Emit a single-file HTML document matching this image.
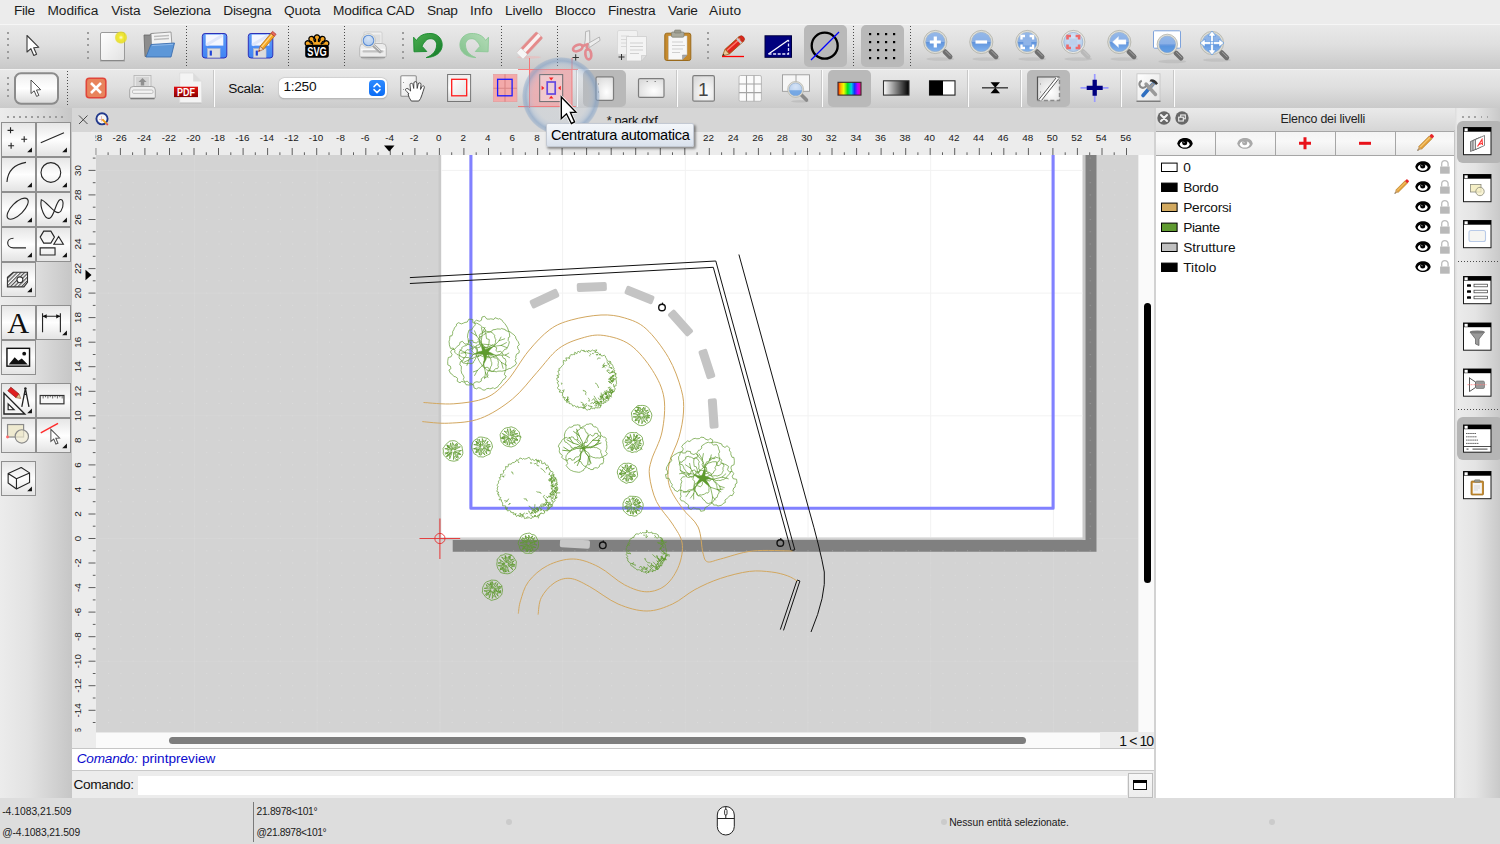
<!DOCTYPE html>
<html lang="it"><head><meta charset="utf-8"><title>QCAD - park.dxf</title>
<style>

html,body{margin:0;padding:0}
body{width:1500px;height:844px;position:relative;overflow:hidden;background:#ececec;font-family:"Liberation Sans",sans-serif;color:#000}
div,span,svg{position:absolute;box-sizing:border-box}
svg{overflow:visible}
.mi{top:2px;height:18px;font-size:14.6px;line-height:18px;white-space:nowrap;color:#1a1a1a}
#menubar{left:0;top:0;width:1500px;height:24px;background:#ececec}
#tb1{left:0;top:24px;width:1500px;height:44.500px;background:linear-gradient(#e9e9e9,#dfdfdf 45%,#c9c9c9);border-top:1px solid #f6f6f6}
#tb2{left:0;top:68.500px;width:1500px;height:39.500px;background:linear-gradient(#e9e9e9,#dfdfdf 45%,#cacaca);border-top:1px solid #f3f3f3}
.vsep{width:1px;background:repeating-linear-gradient(#4a4a4a 0,#4a4a4a 1px,transparent 1px,transparent 3px)}
.wsep{width:2.200px;background:linear-gradient(90deg,#c8c8c8,#c8c8c8 35%,#fcfcfc 35%)}
.pressed{background:#b9b9b9;border-radius:5px}

</style></head>
<body>
<svg width="0" height="0" style="left:0;top:0"><defs>
<linearGradient id="lens" x1="0" y1="0" x2="0" y2="1"><stop offset="0" stop-color="#6f9fe0"/><stop offset="0.5" stop-color="#5f93dc"/><stop offset="1" stop-color="#82b3ee"/></linearGradient>
<radialGradient id="lensl" cx="0.5" cy="0.3" r="0.8"><stop offset="0" stop-color="#d6e4f6"/><stop offset="1" stop-color="#a9c6ea"/></radialGradient>
<linearGradient id="pg" x1="0" y1="0" x2="1" y2="1"><stop offset="0" stop-color="#ffffff"/><stop offset="1" stop-color="#e2e2e2"/></linearGradient>
<radialGradient id="pgr" cx="0.6" cy="0.65" r="0.7"><stop offset="0" stop-color="#ffffff"/><stop offset="1" stop-color="#dcdcdc"/></radialGradient>
<linearGradient id="btn" x1="0" y1="0" x2="0" y2="1"><stop offset="0" stop-color="#efefef"/><stop offset="0.5" stop-color="#ffffff"/><stop offset="1" stop-color="#d9d9d9"/></linearGradient>
<linearGradient id="rainbow" x1="0" y1="0" x2="1" y2="0"><stop offset="0" stop-color="#ff2000"/><stop offset="0.12" stop-color="#ffb000"/><stop offset="0.25" stop-color="#f0ff00"/><stop offset="0.42" stop-color="#00e020"/><stop offset="0.58" stop-color="#00d0e0"/><stop offset="0.72" stop-color="#1030ff"/><stop offset="0.86" stop-color="#c000ff"/><stop offset="1" stop-color="#ff0080"/></linearGradient>
<linearGradient id="graygrad" x1="0" y1="0" x2="1" y2="0"><stop offset="0" stop-color="#fff"/><stop offset="1" stop-color="#000"/></linearGradient>
<linearGradient id="flop" x1="0" y1="0" x2="0" y2="1"><stop offset="0" stop-color="#5f9cf8"/><stop offset="1" stop-color="#3f83f3"/></linearGradient>
<linearGradient id="ug" x1="0" y1="0" x2="1" y2="1"><stop offset="0" stop-color="#4caf50"/><stop offset="1" stop-color="#157a2a"/></linearGradient>
<linearGradient id="rg" x1="0" y1="0" x2="1" y2="1"><stop offset="0" stop-color="#b5dcb8"/><stop offset="1" stop-color="#7fc08a"/></linearGradient>
<linearGradient id="pdfr" x1="0" y1="0" x2="0" y2="1"><stop offset="0" stop-color="#e01010"/><stop offset="1" stop-color="#8a0000"/></linearGradient>
</defs></svg><div id="menubar"><span style="left:14.1px;top:2px;font-size:13.7px;line-height:18px;letter-spacing:-0.366px;white-space:nowrap;color:#1c1c1c">File</span><span style="left:47.4px;top:2px;font-size:13.7px;line-height:18px;letter-spacing:-0.009px;white-space:nowrap;color:#1c1c1c">Modifica</span><span style="left:111.2px;top:2px;font-size:13.7px;line-height:18px;letter-spacing:-0.197px;white-space:nowrap;color:#1c1c1c">Vista</span><span style="left:153.1px;top:2px;font-size:13.7px;line-height:18px;letter-spacing:-0.292px;white-space:nowrap;color:#1c1c1c">Seleziona</span><span style="left:223.3px;top:2px;font-size:13.7px;line-height:18px;letter-spacing:-0.303px;white-space:nowrap;color:#1c1c1c">Disegna</span><span style="left:284px;top:2px;font-size:13.7px;line-height:18px;letter-spacing:-0.159px;white-space:nowrap;color:#1c1c1c">Quota</span><span style="left:333px;top:2px;font-size:13.7px;line-height:18px;letter-spacing:-0.181px;white-space:nowrap;color:#1c1c1c">Modifica CAD</span><span style="left:427px;top:2px;font-size:13.7px;line-height:18px;letter-spacing:-0.367px;white-space:nowrap;color:#1c1c1c">Snap</span><span style="left:470px;top:2px;font-size:13.7px;line-height:18px;letter-spacing:-0.086px;white-space:nowrap;color:#1c1c1c">Info</span><span style="left:505px;top:2px;font-size:13.7px;line-height:18px;letter-spacing:-0.188px;white-space:nowrap;color:#1c1c1c">Livello</span><span style="left:555px;top:2px;font-size:13.7px;line-height:18px;letter-spacing:-0.099px;white-space:nowrap;color:#1c1c1c">Blocco</span><span style="left:608px;top:2px;font-size:13.7px;line-height:18px;letter-spacing:-0.244px;white-space:nowrap;color:#1c1c1c">Finestra</span><span style="left:668px;top:2px;font-size:13.7px;line-height:18px;letter-spacing:-0.287px;white-space:nowrap;color:#1c1c1c">Varie</span><span style="left:709px;top:2px;font-size:13.7px;line-height:18px;letter-spacing:0.259px;white-space:nowrap;color:#1c1c1c">Aiuto</span></div><div id="tb1"></div><div id="tb2"></div><div style="left:7px;top:32.0px;width:2px;height:2px;background:#9c9c9c"></div><div style="left:7px;top:38.2px;width:2px;height:2px;background:#9c9c9c"></div><div style="left:7px;top:44.4px;width:2px;height:2px;background:#9c9c9c"></div><div style="left:7px;top:50.6px;width:2px;height:2px;background:#9c9c9c"></div><div style="left:7px;top:56.8px;width:2px;height:2px;background:#9c9c9c"></div><div style="left:87px;top:32.0px;width:2px;height:2px;background:#9c9c9c"></div><div style="left:87px;top:38.2px;width:2px;height:2px;background:#9c9c9c"></div><div style="left:87px;top:44.4px;width:2px;height:2px;background:#9c9c9c"></div><div style="left:87px;top:50.6px;width:2px;height:2px;background:#9c9c9c"></div><div style="left:87px;top:56.8px;width:2px;height:2px;background:#9c9c9c"></div><div style="left:402px;top:32.0px;width:2px;height:2px;background:#9c9c9c"></div><div style="left:402px;top:38.2px;width:2px;height:2px;background:#9c9c9c"></div><div style="left:402px;top:44.4px;width:2px;height:2px;background:#9c9c9c"></div><div style="left:402px;top:50.6px;width:2px;height:2px;background:#9c9c9c"></div><div style="left:402px;top:56.8px;width:2px;height:2px;background:#9c9c9c"></div><div style="left:707px;top:32.0px;width:2px;height:2px;background:#9c9c9c"></div><div style="left:707px;top:38.2px;width:2px;height:2px;background:#9c9c9c"></div><div style="left:707px;top:44.4px;width:2px;height:2px;background:#9c9c9c"></div><div style="left:707px;top:50.6px;width:2px;height:2px;background:#9c9c9c"></div><div style="left:707px;top:56.8px;width:2px;height:2px;background:#9c9c9c"></div><div class="vsep" style="left:186px;top:26px;height:40px"></div><div class="vsep" style="left:288px;top:26px;height:40px"></div><div class="vsep" style="left:344px;top:26px;height:40px"></div><div class="vsep" style="left:501px;top:26px;height:40px"></div><div class="vsep" style="left:557px;top:26px;height:40px"></div><div class="vsep" style="left:853px;top:26px;height:40px"></div><div class="vsep" style="left:910px;top:26px;height:40px"></div><div class="pressed" style="left:804px;top:25px;width:43px;height:42px"></div><div class="pressed" style="left:861px;top:25px;width:43px;height:42px"></div><div class="pressed" style="left:583px;top:70px;width:43px;height:37px"></div><div class="pressed" style="left:828px;top:70px;width:43px;height:37px"></div><div class="pressed" style="left:1027px;top:70px;width:43px;height:37px"></div><svg style="left:0;top:0" width="1500" height="110" viewBox="0 0 1500 110"><path transform="translate(27,35.5) scale(1.0)" d="M0 0 L0 16.5 L3.9 13.2 L6.8 20 L9.6 18.8 L6.7 12.2 L11.8 11.8 Z" fill="#fff" stroke="#3c3c3c" stroke-width="1.1" stroke-linejoin="round"/><rect x="100.5" y="32.5" width="24" height="28" rx="1.5" fill="url(#pg)" stroke="#9a9a9a" stroke-width="1"/><path d="M100 60.8h25" stroke="#777" stroke-width="1.2" opacity=".6"/><radialGradient id="glow"><stop offset="0" stop-color="#fffbe0"/><stop offset="0.35" stop-color="#f2ea30"/><stop offset="0.8" stop-color="#e6dc20" stop-opacity="0.85"/><stop offset="1" stop-color="#e6dc20" stop-opacity="0"/></radialGradient><circle cx="121" cy="37.5" r="6.6" fill="url(#glow)"/><path d="M144 35 l6 0 l1 -1.5 l3 0 l0 23 l-9 0z" fill="#8c8c8c" stroke="#666" stroke-width=".8"/><path d="M151 33.5 l20 -1.5 l1 14 l-20 10z" fill="#f4f4f4" stroke="#8a8a8a" stroke-width=".8"/><path d="M154 36.5l15 -1M154 39.5l15 -1" stroke="#bdbdbd" stroke-width="1.6"/><path d="M151 44.5 l23.5 -1.5 l-3.5 14 l-25 0z" fill="#5d97d8" stroke="#3d6fb0" stroke-width=".9" stroke-linejoin="round"/><path d="M152 45.6 l21 -1.3" stroke="#8fb9ea" stroke-width="1"/><rect x="202.3" y="33.5" width="24.5" height="24.5" rx="2.8" fill="url(#flop)" stroke="#2d2fb8" stroke-width="1"/><rect x="205.70000000000002" y="34.6" width="17.6" height="11" fill="#f3f6ff"/><path d="M206.3 45 l16 -9.5" stroke="#dfe6fa" stroke-width="3"/><rect x="207.5" y="48.6" width="12.6" height="9" fill="#dcdcdc" stroke="#b9b9c4" stroke-width=".5"/><rect x="209.70000000000002" y="50.6" width="2.2" height="5" fill="#2244d8"/><rect x="248.3" y="33.5" width="24.5" height="24.5" rx="2.8" fill="url(#flop)" stroke="#2d2fb8" stroke-width="1"/><rect x="251.70000000000002" y="34.6" width="17.6" height="11" fill="#f3f6ff"/><path d="M252.3 45 l16 -9.5" stroke="#dfe6fa" stroke-width="3"/><rect x="253.5" y="48.6" width="12.6" height="9" fill="#dcdcdc" stroke="#b9b9c4" stroke-width=".5"/><rect x="255.70000000000002" y="50.6" width="2.2" height="5" fill="#2244d8"/><g transform="translate(259.5,50.5) rotate(-50)"><rect x="3.5" y="-2.3" width="17" height="4.6" fill="#f5a623" stroke="#b87010" stroke-width=".7"/><rect x="20.5" y="-2.3" width="2.6" height="4.6" fill="#e66a5a" stroke="#a33" stroke-width=".6"/><path d="M3.5 -2.3 L-1.5 0 L3.5 2.3z" fill="#f3d9b0" stroke="#a0522d" stroke-width=".6"/><path d="M0.2 -0.8L-1.5 0L0.2 .8z" fill="#a02020"/><path d="M4 -0.6h16" stroke="#ffd98a" stroke-width="1.2"/></g><g fill="#f5a623" stroke="#000" stroke-width="1.3"><g transform="translate(317,47.5) rotate(-66)"><path d="M-1.5 0 L-1.5 -8 a2.6 2.6 0 1 1 3 0 L1.5 0z"/></g><g transform="translate(317,47.5) rotate(-33)"><path d="M-1.5 0 L-1.5 -8 a2.6 2.6 0 1 1 3 0 L1.5 0z"/></g><g transform="translate(317,47.5) rotate(0)"><path d="M-1.5 0 L-1.5 -8 a2.6 2.6 0 1 1 3 0 L1.5 0z"/></g><g transform="translate(317,47.5) rotate(33)"><path d="M-1.5 0 L-1.5 -8 a2.6 2.6 0 1 1 3 0 L1.5 0z"/></g><g transform="translate(317,47.5) rotate(66)"><path d="M-1.5 0 L-1.5 -8 a2.6 2.6 0 1 1 3 0 L1.5 0z"/></g></g><circle cx="317" cy="46" r="4.2" fill="#f5a623"/><rect x="305.2" y="44.8" width="23.6" height="12.9" rx="2.6" fill="#000"/><text x="317" y="56.3" font-family="Liberation Sans, sans-serif" font-weight="bold" font-size="12.8" text-anchor="middle" fill="#fff" textLength="19.6" lengthAdjust="spacingAndGlyphs">SVG</text><rect x="364" y="32" width="18" height="14" rx="1" fill="#f0f0f0" stroke="#c8c8c8" stroke-width=".8"/><rect x="373.500" y="34.500" width="7" height="8" fill="#dedede"/><path d="M359.700 47.500 q0 -4 4 -4 l18.600 0 q4 0 4 4 l0 8 q0 2 -2 2 l-22.600 0 q-2 0 -2 -2z" fill="#ececec" stroke="#b4b4b4" stroke-width=".9"/><path d="M361 49.500h24" stroke="#fafafa" stroke-width="1.500"/><rect x="362.500" y="50.300" width="21" height="2.200" rx="1" fill="#c2c2c2"/><path d="M361 57.300h24" stroke="#9a9a9a" stroke-width="1.300"/><ellipse cx="373" cy="58.600" rx="12" ry="1" fill="#000" opacity=".12"/><line x1="373.500" y1="45.500" x2="380" y2="51.500" stroke="#a6a6a6" stroke-width="3.400" stroke-linecap="round"/><line x1="374" y1="45.300" x2="380" y2="50.800" stroke="#e0e0e0" stroke-width="1" stroke-linecap="round"/><circle cx="368.500" cy="40.500" r="7" fill="#ebebe6" stroke="#b4b4ac" stroke-width=".6"/><circle cx="368.500" cy="40.500" r="5.300" fill="url(#lensl)" stroke="#5f8fd6" stroke-width="1.100"/><path d="M416.5 40.5 C419.500 35 425 33.300 431 33.500 C438 33.800 442.200 39 442.200 44.800 C442.200 52.500 435.500 57.300 426.200 57.600 C432.500 55.300 436.600 51 436.600 44.800 C436.600 40.500 433.500 38.600 430 38.700 C426.800 38.800 424 42 422 46.200 L426.800 51.500 L414 51.800 L413.600 37.200 Z" fill="url(#ug)" stroke="#178a2c" stroke-width=".9" stroke-linejoin="round"/><path transform="translate(902.100,0) scale(-1,1)" d="M416.5 40.5 C419.500 35 425 33.300 431 33.500 C438 33.800 442.200 39 442.200 44.800 C442.200 52.500 435.500 57.300 426.200 57.600 C432.500 55.300 436.600 51 436.600 44.800 C436.600 40.500 433.500 38.600 430 38.700 C426.800 38.800 424 42 422 46.200 L426.800 51.500 L414 51.800 L413.600 37.200 Z" fill="url(#rg)" stroke="#8cc896" stroke-width=".9" stroke-linejoin="round"/><ellipse cx="529" cy="57.3" rx="12" ry="1.400" fill="#e9bcbc" opacity=".7"/><g transform="translate(530,45) rotate(-47)"><rect x="-14" y="-4.600" width="28" height="9.200" rx="1.400" fill="#e58a8a" stroke="#d9a0a0" stroke-width=".6"/><rect x="-14" y="-1.800" width="28" height="3.600" fill="#f8f1f1"/><rect x="-15" y="-4.600" width="6.500" height="9.200" rx="1" fill="#f6f6f6" stroke="#cfcfcf" stroke-width=".6"/></g><path d="M585.6 31.6 L589.6 30.6 L589.8 41.5 L587 48.2 L584.2 46.2 L585.3 40z" fill="#ededed" stroke="#a9a9a9" stroke-width=".8" stroke-linejoin="round"/><path d="M588.6 43.2 L599.4 37 L600.1 40.4 L589.3 47.6z" fill="#ededed" stroke="#a9a9a9" stroke-width=".8" stroke-linejoin="round"/><path d="M582.5 46 L587.5 44.2 M586.8 45 L587.6 49.5" stroke="#e28a90" stroke-width="2.6" stroke-linecap="round"/><ellipse cx="577.8" cy="47.9" rx="5" ry="3" transform="rotate(-24 577.8 47.9)" fill="none" stroke="#e28a90" stroke-width="2.7"/><ellipse cx="588.3" cy="54.2" rx="2.9" ry="5.2" transform="rotate(-8 588.3 54.2)" fill="none" stroke="#e28a90" stroke-width="2.7"/><path d="M572.5 57.5h6.4M575.7 54.3v6.4" stroke="#333" stroke-width="1"/><g><rect x="617.500" y="30.500" width="20" height="24" rx="1.500" fill="#f1f1f1" stroke="#d6d6d6" stroke-width=".8"/><path d="M621 36h8M621 39.500h8M621 43h8M621 46.500h8" stroke="#d8d8d8" stroke-width="1"/><path d="M626.500 36.500 l20 0 l0 19 l-5 5.500 l-15 0z" fill="#f4f4f4" stroke="#cdcdcd" stroke-width=".8"/><path d="M630 43h13M630 46.500h13M630 50h13M630 53.500h9" stroke="#d0d0d0" stroke-width="1"/><path d="M646.500 55.500 l-5 0 l0 5.500z" fill="#e0e0e0" stroke="#c4c4c4" stroke-width=".6"/></g><path d="M618.500 57h6M621.500 54v6" stroke="#333" stroke-width="1"/><rect x="664.800" y="33.200" width="26" height="27.300" rx="2" fill="#c58a2e" stroke="#9a6a1c" stroke-width="1"/><path d="M668.500 36 l18.500 0 l0 19 l-4.500 4.500 l-14 0z" fill="#f7f7f7" stroke="#c9c9c9" stroke-width=".5"/><path d="M672 42h11M672 45.500h13M672 49h11M672 52.500h8" stroke="#cfcfcf" stroke-width="1.100"/><path d="M687 55 l-4.500 0 l0 4.500z" fill="#a8a8a8" stroke="#8a8a8a" stroke-width=".5"/><rect x="671.500" y="32" width="12.500" height="5.200" rx="1.200" fill="#a9a99c" stroke="#7c7c70" stroke-width=".7"/><rect x="674.500" y="30" width="6.500" height="3" rx="1" fill="#9a9a8e" stroke="#7c7c70" stroke-width=".6"/><g transform="translate(723.500,55) rotate(-42)"><rect x="5" y="-3.200" width="19" height="6.400" fill="#e0241c" stroke="#9c5a10" stroke-width=".8"/><path d="M5.500 -1h18" stroke="#ff7a6a" stroke-width="1.400"/><rect x="20" y="-3.200" width="2.200" height="6.400" fill="#c9c9c9"/><path d="M24 -3.200 q3 0 3 3.200 q0 3.200 -3 3.200z" fill="#e0241c" stroke="#9c2a10" stroke-width=".6"/><path d="M5 -3.200 L-1.500 0 L5 3.200z" fill="#e9c79a" stroke="#9c5a10" stroke-width=".7"/><path d="M.800 -1.100L-1.500 0L.800 1.100z" fill="#222"/></g><path d="M722 56.500h22" stroke="#ff0000" stroke-width="1.300"/><rect x="765" y="35.800" width="26.500" height="21.500" fill="#00007e" stroke="#000040" stroke-width="1"/><path d="M768.500 54 L788.500 40" stroke="#fff" stroke-width="1.300"/><path d="M768.500 54 L788.500 54 L788.500 40" stroke="#e8e8ff" stroke-width="1.300" fill="none" stroke-dasharray="3 1.600"/><circle cx="824.700" cy="45.700" r="13" fill="none" stroke="#000" stroke-width="2.300"/><path d="M811 60 L839 32" stroke="#0000ff" stroke-width="1.300"/><rect x="869" y="33" width="2.200" height="2.200" fill="#000"/><rect x="869" y="41" width="2.200" height="2.200" fill="#000"/><rect x="869" y="49" width="2.200" height="2.200" fill="#000"/><rect x="869" y="57" width="2.200" height="2.200" fill="#000"/><rect x="877" y="33" width="2.200" height="2.200" fill="#000"/><rect x="877" y="41" width="2.200" height="2.200" fill="#000"/><rect x="877" y="49" width="2.200" height="2.200" fill="#000"/><rect x="877" y="57" width="2.200" height="2.200" fill="#000"/><rect x="885" y="33" width="2.200" height="2.200" fill="#000"/><rect x="885" y="41" width="2.200" height="2.200" fill="#000"/><rect x="885" y="49" width="2.200" height="2.200" fill="#000"/><rect x="885" y="57" width="2.200" height="2.200" fill="#000"/><rect x="893" y="33" width="2.200" height="2.200" fill="#000"/><rect x="893" y="41" width="2.200" height="2.200" fill="#000"/><rect x="893" y="49" width="2.200" height="2.200" fill="#000"/><rect x="893" y="57" width="2.200" height="2.200" fill="#000"/><ellipse cx="940.3" cy="59" rx="14" ry="1.8" fill="#000" opacity="0.07"/><line x1="944.988" y1="51.688" x2="949.988" y2="56.688" stroke="#6f6f6f" stroke-width="5" stroke-linecap="round"/><line x1="945.588" y1="51.088" x2="950.588" y2="56.088" stroke="#d8d8d8" stroke-width=".9" stroke-linecap="round" opacity=".55"/><circle cx="935.3" cy="42" r="11.6" fill="#deded6" stroke="#a9a9a0" stroke-width="0.7"/><circle cx="935.3" cy="42" r="9.6" fill="url(#lens)" stroke="#88a4c8" stroke-width="0.6"/><path d="M925.8 42 A9.5 9.5 0 0 1 944.8 42 Z" fill="#cfe0f7" opacity=".38"/><path d="M929.800 42h11M935.300 36.500v11" stroke="#fff" stroke-width="3.200"/><path d="M929.800 42h11M935.300 36.500v11" stroke="#4a83cf" stroke-width="0" /><ellipse cx="986.3" cy="59" rx="14" ry="1.8" fill="#000" opacity="0.07"/><line x1="990.988" y1="51.688" x2="995.988" y2="56.688" stroke="#6f6f6f" stroke-width="5" stroke-linecap="round"/><line x1="991.588" y1="51.088" x2="996.588" y2="56.088" stroke="#d8d8d8" stroke-width=".9" stroke-linecap="round" opacity=".55"/><circle cx="981.3" cy="42" r="11.6" fill="#deded6" stroke="#a9a9a0" stroke-width="0.7"/><circle cx="981.3" cy="42" r="9.6" fill="url(#lens)" stroke="#88a4c8" stroke-width="0.6"/><path d="M971.8 42 A9.5 9.5 0 0 1 990.8 42 Z" fill="#cfe0f7" opacity=".38"/><path d="M975.500 42h11.600" stroke="#fff" stroke-width="3.200"/><ellipse cx="1032.3" cy="59" rx="14" ry="1.8" fill="#000" opacity="0.07"/><line x1="1036.988" y1="51.688" x2="1041.988" y2="56.688" stroke="#6f6f6f" stroke-width="5" stroke-linecap="round"/><line x1="1037.588" y1="51.088" x2="1042.588" y2="56.088" stroke="#d8d8d8" stroke-width=".9" stroke-linecap="round" opacity=".55"/><circle cx="1027.3" cy="42" r="11.6" fill="#deded6" stroke="#a9a9a0" stroke-width="0.7"/><circle cx="1027.3" cy="42" r="9.6" fill="url(#lens)" stroke="#88a4c8" stroke-width="0.6"/><path d="M1017.8 42 A9.5 9.5 0 0 1 1036.8 42 Z" fill="#cfe0f7" opacity=".38"/><rect x="1023.300" y="38.500" width="8" height="7" fill="#8fb4e8"/><path d="M1021.500 39.500v-3.500h3.500M1029.600 36h3.500v3.500M1033.100 44.500v3.500h-3.500M1025 48h-3.500v-3.500" stroke="#fff" stroke-width="2.3" fill="none"/><ellipse cx="1078.3" cy="59" rx="14" ry="1.8" fill="#000" opacity="0.07"/><line x1="1082.988" y1="51.688" x2="1087.988" y2="56.688" stroke="#b9b9b9" stroke-width="5" stroke-linecap="round"/><line x1="1083.588" y1="51.088" x2="1088.588" y2="56.088" stroke="#d8d8d8" stroke-width=".9" stroke-linecap="round" opacity=".55"/><circle cx="1073.3" cy="42" r="11.6" fill="#e8e8e4" stroke="#a9a9a0" stroke-width="0.7"/><circle cx="1073.3" cy="42" r="9.6" fill="url(#lensl)" stroke="#88a4c8" stroke-width="0.6"/><rect x="1069.300" y="38.500" width="8" height="7" fill="#bcd0ec"/><path d="M1067.500 39.500v-3.500h3.500M1075.600 36h3.500v3.500M1079.100 44.500v3.500h-3.500M1071 48h-3.500v-3.500" stroke="#ee6a6a" stroke-width="2.6" fill="none"/><ellipse cx="1124.3" cy="59" rx="14" ry="1.8" fill="#000" opacity="0.07"/><line x1="1128.988" y1="51.688" x2="1133.988" y2="56.688" stroke="#6f6f6f" stroke-width="5" stroke-linecap="round"/><line x1="1129.588" y1="51.088" x2="1134.588" y2="56.088" stroke="#d8d8d8" stroke-width=".9" stroke-linecap="round" opacity=".55"/><circle cx="1119.3" cy="42" r="11.6" fill="#deded6" stroke="#a9a9a0" stroke-width="0.7"/><circle cx="1119.3" cy="42" r="9.6" fill="url(#lens)" stroke="#88a4c8" stroke-width="0.6"/><path d="M1109.8 42 A9.5 9.5 0 0 1 1128.8 42 Z" fill="#cfe0f7" opacity=".38"/><path d="M1112.500 42 l6 -5.500 l0 3.200 l7.500 0 l0 4.600 l-7.500 0 l0 3.200z" fill="#fff" stroke="#dfe9f8" stroke-width=".4"/><rect x="1153.500" y="30.800" width="27" height="17.400" rx="1" fill="#fff" stroke="#7ea3dc" stroke-width="1"/><ellipse cx="1172.3" cy="61.4" rx="14" ry="1.8" fill="#000" opacity="0.07"/><line x1="1175.98" y1="53.08" x2="1180.98" y2="58.08" stroke="#6f6f6f" stroke-width="5" stroke-linecap="round"/><line x1="1176.58" y1="52.48" x2="1181.58" y2="57.48" stroke="#d8d8d8" stroke-width=".9" stroke-linecap="round" opacity=".55"/><circle cx="1167.3" cy="44.4" r="10.2" fill="#deded6" stroke="#a9a9a0" stroke-width="0.7"/><circle cx="1167.3" cy="44.4" r="8.2" fill="url(#lens)" stroke="#88a4c8" stroke-width="0.6"/><path d="M1159.2 44.4 A8.1 8.1 0 0 1 1175.3999999999999 44.4 Z" fill="#cfe0f7" opacity=".38"/><path d="M1159.600 46 a7.800 7.800 0 0 0 15.400 0z" fill="#4f8fdc" opacity=".55"/><ellipse cx="1217" cy="60" rx="14" ry="1.8" fill="#000" opacity="0.07"/><line x1="1221.688" y1="52.688" x2="1226.688" y2="57.688" stroke="#6f6f6f" stroke-width="5" stroke-linecap="round"/><line x1="1222.288" y1="52.088" x2="1227.288" y2="57.088" stroke="#d8d8d8" stroke-width=".9" stroke-linecap="round" opacity=".55"/><circle cx="1212" cy="43" r="11.6" fill="#deded6" stroke="#a9a9a0" stroke-width="0.7"/><circle cx="1212" cy="43" r="9.6" fill="url(#lens)" stroke="#88a4c8" stroke-width="0.6"/><path d="M1202.5 43 A9.5 9.5 0 0 1 1221.5 43 Z" fill="#cfe0f7" opacity=".38"/><path d="M1212 31 l4 5 l-2.600 0 l0 14 l2.600 0 l-4 5 l-4 -5 l2.600 0 l0 -14 l-2.600 0z M1200 43 l5 -4 l0 2.600 l14 0 l0 -2.600 l5 4 l-5 4 l0 -2.600 l-14 0 l0 2.600z" fill="#fff" stroke="#5b97e0" stroke-width=".7"/><rect x="15" y="73.300" width="43" height="30.400" rx="6" fill="url(#btn)" stroke="#8b8b8b" stroke-width="2"/><path transform="translate(31,80) scale(0.82)" d="M0 0 L0 16.5 L3.9 13.2 L6.8 20 L9.6 18.8 L6.7 12.2 L11.8 11.8 Z" fill="#fff" stroke="#3c3c3c" stroke-width="1.1" stroke-linejoin="round"/><rect x="86.300" y="78.300" width="19.500" height="19.500" rx="3" fill="#e8845c" stroke="#e0453a" stroke-width="1.600"/><path d="M91 83l10 10M101 83l-10 10" stroke="#fff" stroke-width="2.600"/><rect x="134" y="75.500" width="17" height="11" fill="#e6e6e6" stroke="#b4b4b4" stroke-width=".8"/><rect x="136" y="77" width="13" height="9" fill="#d4d4d4"/><path d="M142.500 78 l4 4 l-2.300 0 l0 3.500 l-3.400 0 l0 -3.500 l-2.300 0z" fill="#8f8f8f"/><path d="M129.700 90 q0 -3.500 3.500 -3.500 l18.600 0 q3.500 0 3.500 3.500 l0 7 q0 1.500 -1.500 1.500 l-22.600 0 q-1.500 0 -1.500 -1.500z" fill="#eeeeee" stroke="#9f9f9f" stroke-width=".9"/><rect x="132.500" y="90" width="20.500" height="3.400" rx="1.200" fill="#f4f4f4" stroke="#a8a8a8" stroke-width=".7"/><path d="M130.500 98.500h24" stroke="#7a7a7a" stroke-width="1.600"/><path d="M179.700 73 l13.500 0 l8.500 8.500 l0 21.200 l-22 0z" fill="#f4f4f4" stroke="#dadada" stroke-width=".7"/><path d="M193.200 73 l0 8.500 l8.500 0z" fill="#dcdcdc"/><path d="M180 103.200h21.500" stroke="#bdbdbd" stroke-width=".8"/><rect x="174" y="86.700" width="24" height="10.400" fill="url(#pdfr)"/><text x="186" y="95.800" font-family="Liberation Sans, sans-serif" font-weight="bold" font-size="10.800" fill="#fff" text-anchor="middle" textLength="18" lengthAdjust="spacingAndGlyphs">PDF</text><rect x="400.800" y="75.800" width="15.500" height="20.500" rx="1" fill="url(#pg)" stroke="#8d8d8d" stroke-width="1.100"/><path d="M403 82.500h1M403 89.500h1" stroke="#999" stroke-width="1"/><g transform="translate(0,16.200) scale(1,.84)"><path d="M409 92.500 q-2.500 -3.200 -3.300 -4.200 q-.800 -1.600 .800 -2.200 q1.500 -.300 2.800 1.500 l1.300 1.500 l-.600 -7.500 q0 -1.700 1.400 -1.700 q1.300 0 1.600 1.600 l.700 4.500 l.200 -6.500 q.100 -1.600 1.500 -1.600 q1.400 0 1.500 1.600 l.300 6.500 l1 -5.300 q.300 -1.500 1.600 -1.300 q1.300 .200 1.200 1.800 l-.500 6 l1.400 -3.300 q.600 -1.300 1.700 -.900 q1.100 .500 .700 2 q-1.500 5.500 -2.300 8.500 q-1.200 5 -3.200 7.500 l-7.500 0 q-2.300 -3.500 -3.300 -8.500z" fill="#fff" stroke="#3a3a3a" stroke-width="1" stroke-linejoin="round"/></g><rect x="447.600" y="74.500" width="23" height="27" fill="url(#btn)" stroke="#767676" stroke-width="1"/><rect x="451.700" y="79.300" width="15" height="16.500" fill="url(#pg)" stroke="#ff1a1a" stroke-width="1.300"/><rect x="493.500" y="74.300" width="23.500" height="27.400" fill="#f3a9a9" stroke="#e59a9a" stroke-width=".6"/><path d="M505 74.300v27.400M493.500 88.200h23.500" stroke="#d98686" stroke-width="1.100"/><rect x="497.600" y="79.300" width="14.500" height="16.500" fill="none" stroke="#1a1aff" stroke-width="1.300"/><rect x="529.5" y="69.500" width="42.5" height="37" fill="#f4a9a9" opacity=".9"/><path d="M529.500 58v52M572 58v52M518 69.500h60M518 106.500h60" stroke="#ff5a5a" stroke-width="1" opacity=".75"/><rect x="539.700" y="74.600" width="23" height="27" fill="#f9c9c9" stroke="#5f5f5f" stroke-width="1"/><rect x="547.200" y="82" width="8" height="12" fill="#f3d0d6" stroke="#5a3ae0" stroke-width="1.700"/><path d="M548.900 77.600 l4.600 0 l-2.300 2.800z M548.900 98.600 l4.600 0 l-2.300 -2.800z M541.600 85.700 l0 4.600 l2.800 -2.300z M560.800 85.700 l0 4.600 l-2.800 -2.300z" fill="#ff1010"/><rect x="596" y="76.800" width="17.500" height="23.500" rx="1.500" fill="url(#pgr)" stroke="#7d7d7d" stroke-width="1.200"/><path d="M598 84h1M598 92h1" stroke="#888" stroke-width="1"/><rect x="638.500" y="78.600" width="25.500" height="18.800" rx="1.500" fill="url(#pgr)" stroke="#7d7d7d" stroke-width="1.200"/><path d="M646.500 81.500h1.500M654.500 81.500h1.500" stroke="#888" stroke-width="1"/><rect x="692.800" y="75.700" width="21.600" height="25.500" rx="1.500" fill="url(#pgr)" stroke="#7d7d7d" stroke-width="1.200"/><text x="703.400" y="95.500" font-family="Liberation Sans, sans-serif" font-size="19" fill="#444" text-anchor="middle">1</text><rect x="739" y="75.500" width="22.400" height="25.800" rx="1.500" fill="#fbfbfb" stroke="#b9b9b9" stroke-width="1"/><path d="M746.500 75.500v25.800M754 75.500v25.800M739 84h22.400M739 92.600h22.400" stroke="#a4a4a4" stroke-width="1.100"/><rect x="782.500" y="74.800" width="27" height="16.500" fill="#f6f6f6" stroke="#9a9a9a" stroke-width=".9"/><path d="M796 74.800v16.500" stroke="#9a9a9a" stroke-width=".9"/><ellipse cx="800" cy="101.300" rx="9" ry="1.200" fill="#000" opacity=".08"/><line x1="801" y1="94.500" x2="806.500" y2="100" stroke="#8a8a8a" stroke-width="3.600" stroke-linecap="round"/><circle cx="795.600" cy="89.400" r="8" fill="#dedcd4" stroke="#a9a9a0" stroke-width=".6"/><circle cx="795.600" cy="89.400" r="6.400" fill="url(#lensl)" stroke="#8fa9c9" stroke-width=".6"/><path d="M789.300 90.200 a6.400 6.400 0 0 0 12.600 0z" fill="#5f9ae0" opacity=".75"/><rect x="838" y="82.300" width="23" height="12.800" fill="url(#rainbow)" stroke="#3a2a2a" stroke-width="1.100"/><rect x="883.500" y="80.800" width="25.500" height="14.300" fill="url(#graygrad)" stroke="#333" stroke-width="1.100"/><rect x="929.500" y="80.800" width="25.500" height="14.300" fill="#fff" stroke="#222" stroke-width="1.100"/><rect x="929.500" y="80.800" width="13.500" height="14.300" fill="#000"/><path d="M982 87.800h26" stroke="#444" stroke-width="1.500"/><path d="M990.500 82.300 l9.500 0 l-4.750 5.500z M990.500 93.300 l9.500 0 l-4.750 -5.500z" fill="#000"/><rect x="1037.500" y="77" width="22" height="23.500" fill="url(#pgr)" stroke="none"/><path d="M1059.500 77 L1037.500 77 L1037.500 100.500" stroke="#555" stroke-width="1.200" fill="none"/><path d="M1037.500 100.500 L1059.500 100.500 L1059.500 77" stroke="#8a8a8a" stroke-width="1.400" fill="none" stroke-dasharray="4 2.400"/><path d="M1040 100 L1057.500 78" stroke="#fff" stroke-width="3"/><path d="M1038.800 99.700 L1056 78M1041.500 100.400 L1058.800 78.600" stroke="#555" stroke-width="1"/><path d="M1040 84h1M1040 92h1" stroke="#888" stroke-width="1"/><path d="M1080.500 87.800h28M1094.700 74v28" stroke="#9a9aff" stroke-width="1.700"/><path d="M1086.700 87.800h16M1094.700 79.800v16" stroke="#00007e" stroke-width="4.300"/><rect x="1137" y="73.800" width="23" height="27.200" fill="url(#pg)" stroke="#c4c4c4" stroke-width=".8"/><path d="M1136.500 101.300h24" stroke="#7d7d7d" stroke-width="1.400"/><path d="M1143 95.500 L1153 84" stroke="#2f6fc0" stroke-width="3.600" stroke-linecap="round"/><path d="M1148 89.800 L1153.500 83.500" stroke="#9a9a9a" stroke-width="3"/><path d="M1150.500 79.500 q4 -1 7.500 4 l-2 1.500 q-3 -4 -6.500 -3.500z" fill="#333"/><path d="M1155.500 94.500 L1146 84" stroke="#9a9a9a" stroke-width="3.400" stroke-linecap="round"/><path d="M1141.800 80.800 a3.600 3.600 0 1 0 4.500 4.800" fill="none" stroke="#8a8a8a" stroke-width="2.200"/></svg><div style="left:7px;top:76.5px;width:2px;height:2px;background:#9c9c9c"></div><div style="left:7px;top:82.7px;width:2px;height:2px;background:#9c9c9c"></div><div style="left:7px;top:88.9px;width:2px;height:2px;background:#9c9c9c"></div><div style="left:7px;top:95.1px;width:2px;height:2px;background:#9c9c9c"></div><div class="vsep" style="left:67px;top:71px;height:34px"></div><div class="wsep" style="left:213.1px;top:70px;height:37px"></div><div class="wsep" style="left:576.1px;top:70px;height:37px"></div><div class="wsep" style="left:676.1px;top:70px;height:37px"></div><div class="wsep" style="left:821.1px;top:70px;height:37px"></div><div class="wsep" style="left:967.1px;top:70px;height:37px"></div><div class="wsep" style="left:1020.1px;top:70px;height:37px"></div><div class="wsep" style="left:1120.1px;top:70px;height:37px"></div><div class="wsep" style="left:1173.1px;top:70px;height:37px"></div><span style="left:228.2px;top:80px;font-size:13.7px;line-height:18px;letter-spacing:-0.341px;white-space:nowrap;color:#111">Scala:</span><div style="left:279px;top:77.500px;width:108px;height:20.500px;background:#fff;border-radius:5.500px;box-shadow:0 0 0 .5px #c9c9c9,0 .5px 1.500px rgba(0,0,0,.25)"></div><span style="left:283.6px;top:78px;font-size:13.7px;line-height:18px;letter-spacing:-0.333px;white-space:nowrap;color:#111">1:250</span><div style="left:369px;top:80px;width:16px;height:16px;border-radius:4px;background:linear-gradient(#2f8bff,#0a6cf5)"></div><svg style="left:369px;top:80px" width="16" height="16" viewBox="0 0 16 16" ><path d="M5 6.600 L8 3.600 L11 6.600 M5 9.600 L8 12.600 L11 9.600" stroke="#fff" stroke-width="1.500" fill="none" stroke-linecap="round" stroke-linejoin="round"/></svg>
<div style="left:0;top:108px;width:72px;height:690px;background:linear-gradient(90deg,#ececec,#e2e2e2 40%,#c6c6c6)"></div><div style="left:7.0px;top:116.200px;width:2px;height:2px;background:#9c9c9c"></div><div style="left:13.0px;top:116.200px;width:2px;height:2px;background:#9c9c9c"></div><div style="left:19.0px;top:116.200px;width:2px;height:2px;background:#9c9c9c"></div><div style="left:25.0px;top:116.200px;width:2px;height:2px;background:#9c9c9c"></div><div style="left:31.0px;top:116.200px;width:2px;height:2px;background:#9c9c9c"></div><div style="left:37.0px;top:116.200px;width:2px;height:2px;background:#9c9c9c"></div><div style="left:43.0px;top:116.200px;width:2px;height:2px;background:#9c9c9c"></div><div style="left:49.0px;top:116.200px;width:2px;height:2px;background:#9c9c9c"></div><div style="left:55.0px;top:116.200px;width:2px;height:2px;background:#9c9c9c"></div><div style="left:61.0px;top:116.200px;width:2px;height:2px;background:#9c9c9c"></div><div style="left:1.2px;top:122px;width:34.5px;height:34.500px;background:linear-gradient(#e6e6e6,#f4f4f4 30%,#fefefe 50%,#e6e6e6 95%);border:1px solid #8f8f8f"></div><svg style="left:1.2px;top:122px" width="34.5" height="34.500" viewBox="0 0 29 29"><path d="M8 4.500v5M5.500 7h5M19.500 12v5M17 14.500h5M8.500 17.500v5M6 20h5" fill="none" stroke="#262626" stroke-width=".95"/><path d="M26 21.500 L26 25.500 L22 25.500z" fill="#111"/></svg><div style="left:36.2px;top:122px;width:34.5px;height:34.500px;background:linear-gradient(#e6e6e6,#f4f4f4 30%,#fefefe 50%,#e6e6e6 95%);border:1px solid #8f8f8f"></div><svg style="left:36.2px;top:122px" width="34.5" height="34.500" viewBox="0 0 29 29"><path d="M4 17.500 L23.500 9" fill="none" stroke="#262626" stroke-width=".95"/><path d="M26 21.500 L26 25.500 L22 25.500z" fill="#111"/></svg><div style="left:1.2px;top:157px;width:34.5px;height:34.500px;background:linear-gradient(#e6e6e6,#f4f4f4 30%,#fefefe 50%,#e6e6e6 95%);border:1px solid #8f8f8f"></div><svg style="left:1.2px;top:157px" width="34.5" height="34.500" viewBox="0 0 29 29"><path d="M5 21 Q6 7 21 4.500" fill="none" stroke="#262626" stroke-width=".95"/><path d="M26 21.500 L26 25.500 L22 25.500z" fill="#111"/></svg><div style="left:36.2px;top:157px;width:34.5px;height:34.500px;background:linear-gradient(#e6e6e6,#f4f4f4 30%,#fefefe 50%,#e6e6e6 95%);border:1px solid #8f8f8f"></div><svg style="left:36.2px;top:157px" width="34.5" height="34.500" viewBox="0 0 29 29"><circle cx="12.500" cy="13" r="8.300" fill="none" stroke="#262626" stroke-width=".95"/><path d="M26 21.500 L26 25.500 L22 25.500z" fill="#111"/></svg><div style="left:1.2px;top:192px;width:34.5px;height:34.500px;background:linear-gradient(#e6e6e6,#f4f4f4 30%,#fefefe 50%,#e6e6e6 95%);border:1px solid #8f8f8f"></div><svg style="left:1.2px;top:192px" width="34.5" height="34.500" viewBox="0 0 29 29"><ellipse cx="14" cy="14" rx="11.500" ry="5" transform="rotate(-45 14 14)" fill="none" stroke="#262626" stroke-width=".95"/><path d="M26 21.500 L26 25.500 L22 25.500z" fill="#111"/></svg><div style="left:36.2px;top:192px;width:34.5px;height:34.500px;background:linear-gradient(#e6e6e6,#f4f4f4 30%,#fefefe 50%,#e6e6e6 95%);border:1px solid #8f8f8f"></div><svg style="left:36.2px;top:192px" width="34.5" height="34.500" viewBox="0 0 29 29"><path d="M4.500 6.500 C3 13 7.500 23.500 11.500 22 C15.500 20.500 16.500 8.500 20 6.500 C23.500 5 23.500 12.500 21 16 C17 21.500 9.500 8 4.500 6.500z" fill="none" stroke="#262626" stroke-width=".95"/><path d="M26 21.500 L26 25.500 L22 25.500z" fill="#111"/></svg><div style="left:1.2px;top:227px;width:34.5px;height:34.500px;background:linear-gradient(#e6e6e6,#f4f4f4 30%,#fefefe 50%,#e6e6e6 95%);border:1px solid #8f8f8f"></div><svg style="left:1.2px;top:227px" width="34.5" height="34.500" viewBox="0 0 29 29"><path d="M10.500 9.500 C4 9.500 4 17.500 10.500 17.500 L21 17.500" fill="none" stroke="#262626" stroke-width=".95"/><path d="M26 21.500 L26 25.500 L22 25.500z" fill="#111"/></svg><div style="left:36.2px;top:227px;width:34.5px;height:34.500px;background:linear-gradient(#e6e6e6,#f4f4f4 30%,#fefefe 50%,#e6e6e6 95%);border:1px solid #8f8f8f"></div><svg style="left:36.2px;top:227px" width="34.5" height="34.500" viewBox="0 0 29 29"><path d="M6.500 3.500 l6 0 l3 5 l-3 5 l-6 0 l-3 -5z M19 8 l4 6.500 l-8 0z M3.500 17.500 h12.500 v6 h-12.500z" fill="none" stroke="#262626" stroke-width=".95"/><path d="M26 21.500 L26 25.500 L22 25.500z" fill="#111"/></svg><div style="left:1.2px;top:262px;width:34.5px;height:34.500px;background:linear-gradient(#e6e6e6,#f4f4f4 30%,#fefefe 50%,#e6e6e6 95%);border:1px solid #8f8f8f"></div><svg style="left:1.2px;top:262px" width="34.5" height="34.500" viewBox="0 0 29 29"><defs><pattern id="hat" width="2.200" height="2.200" patternUnits="userSpaceOnUse" patternTransform="rotate(45)"><rect width="1" height="2.200" fill="#555"/></pattern></defs><path d="M10.300 8.600 L22.300 8.600 L22.300 17 L19.300 20.900 L5.400 20.900 L5.400 12.900z" fill="url(#hat)" stroke="#333" stroke-width=".9"/><circle cx="15.900" cy="15" r="2.500" fill="#fff" stroke="#333" stroke-width=".9"/><path d="M26 21.500 L26 25.500 L22 25.500z" fill="#111"/></svg><div style="left:1.2px;top:305px;width:34.5px;height:34.500px;background:linear-gradient(#e6e6e6,#f4f4f4 30%,#fefefe 50%,#e6e6e6 95%);border:1px solid #8f8f8f"></div><svg style="left:1.2px;top:305px" width="34.5" height="34.500" viewBox="0 0 29 29"><text x="14.500" y="23.800" font-family="Liberation Serif, serif" font-size="25.500" text-anchor="middle" fill="#111">A</text></svg><div style="left:36.2px;top:305px;width:34.5px;height:34.500px;background:linear-gradient(#e6e6e6,#f4f4f4 30%,#fefefe 50%,#e6e6e6 95%);border:1px solid #8f8f8f"></div><svg style="left:36.2px;top:305px" width="34.5" height="34.500" viewBox="0 0 29 29"><path d="M5.500 7v16M20.500 7v16M5.500 9.500h15" fill="none" stroke="#262626" stroke-width=".95"/><path d="M5.500 9.500l3.500 -1.800v3.600z M20.500 9.500l-3.500 -1.800v3.600z" fill="#111"/><path d="M26 21.500 L26 25.500 L22 25.500z" fill="#111"/></svg><div style="left:1.2px;top:340px;width:34.5px;height:34.500px;background:linear-gradient(#e6e6e6,#f4f4f4 30%,#fefefe 50%,#e6e6e6 95%);border:1px solid #8f8f8f"></div><svg style="left:1.2px;top:340px" width="34.5" height="34.500" viewBox="0 0 29 29"><rect x="5" y="7" width="19" height="15" fill="#fff" stroke="#111" stroke-width="1.200"/><path d="M6.500 20.500 l5 -6 l3 3 l3 -2 l5 5z" fill="#111"/><circle cx="19.500" cy="11.500" r="1.600" fill="#111"/></svg><div style="left:1.2px;top:383px;width:34.5px;height:34.500px;background:linear-gradient(#e6e6e6,#f4f4f4 30%,#fefefe 50%,#e6e6e6 95%);border:1px solid #8f8f8f"></div><svg style="left:1.2px;top:383px" width="34.5" height="34.500" viewBox="0 0 29 29"><path d="M2.500 8.500 L2.500 26 L20 26z" fill="#f4f4f4" stroke="#222" stroke-width="1.200"/><path d="M6 17.500 L6 22.500 L11 22.500z" fill="#fff" stroke="#222" stroke-width="1"/><g transform="translate(7,5) rotate(40)"><rect x="0" y="-2" width="9" height="4" fill="#e02020" stroke="#801010" stroke-width=".5"/><path d="M9 -2 l3.500 2 l-3.500 2z" fill="#e9c79a" stroke="#7a4a20" stroke-width=".4"/></g><path d="M20.500 4.500 L17.500 20 M20.500 4.500 L23.500 20 M19 9.500h3" fill="none" stroke="#222" stroke-width="1.100"/><circle cx="20.500" cy="4.500" r="1" fill="#222"/><path d="M26 21.500 L26 25.500 L22 25.500z" fill="#111"/></svg><div style="left:36.2px;top:383px;width:34.5px;height:34.500px;background:linear-gradient(#e6e6e6,#f4f4f4 30%,#fefefe 50%,#e6e6e6 95%);border:1px solid #8f8f8f"></div><svg style="left:36.2px;top:383px" width="34.5" height="34.500" viewBox="0 0 29 29"><rect x="3.500" y="10.500" width="20" height="7" fill="#f7f7f7" stroke="#333" stroke-width="1"/><path d="M6 10.500v2.500M8 10.500v1.500M10 10.500v2.500M12 10.500v1.500M14 10.500v2.500M16 10.500v1.500M18 10.500v2.500M20 10.500v1.500M22 10.500v2.500" stroke="#333" stroke-width=".6"/></svg><div style="left:1.2px;top:418px;width:34.5px;height:34.500px;background:linear-gradient(#e6e6e6,#f4f4f4 30%,#fefefe 50%,#e6e6e6 95%);border:1px solid #8f8f8f"></div><svg style="left:1.2px;top:418px" width="34.5" height="34.500" viewBox="0 0 29 29"><rect x="5.500" y="5.500" width="13.500" height="10.500" fill="#efead0" stroke="#8a8a8a" stroke-width="1"/><circle cx="17.500" cy="15.500" r="5.600" fill="#efead0" fill-opacity=".7" stroke="#8a8a8a" stroke-width="1"/><circle cx="5.500" cy="16" r="1.200" fill="#ff6a6a"/></svg><div style="left:36.2px;top:418px;width:34.5px;height:34.500px;background:linear-gradient(#e6e6e6,#f4f4f4 30%,#fefefe 50%,#e6e6e6 95%);border:1px solid #8f8f8f"></div><svg style="left:36.2px;top:418px" width="34.5" height="34.500" viewBox="0 0 29 29"><path d="M4 12.500 L18.500 4.500" stroke="#ff2a2a" stroke-width="1.200"/><path transform="translate(12.500,9.500) scale(.62)" d="M0 0 L0 16.500 L3.900 13.200 L6.800 20 L9.600 18.800 L6.700 12.200 L11.800 11.800 Z" fill="#fff" stroke="#555" stroke-width="1.400"/><path d="M26 21.500 L26 25.500 L22 25.500z" fill="#111"/></svg><div style="left:1.2px;top:461px;width:34.5px;height:34.500px;background:linear-gradient(#e6e6e6,#f4f4f4 30%,#fefefe 50%,#e6e6e6 95%);border:1px solid #8f8f8f"></div><svg style="left:1.2px;top:461px" width="34.5" height="34.500" viewBox="0 0 29 29"><path d="M6 10.500 L17 5.500 L24 10 L24 18 L13 23.500 L6 18.500z M6 10.500 L13 15 L24 10 M13 15 L13 23.500" fill="none" stroke="#262626" stroke-width=".95" stroke-linejoin="round"/><path d="M26 21.500 L26 25.500 L22 25.500z" fill="#111"/></svg><div style="left:72px;top:108px;width:1083px;height:24px;background:#d6d6d6"></div><svg style="left:72px;top:108px" width="60" height="24" viewBox="72 108 60 24"><path d="M79 115.500l8.500 8.500M87.500 115.500l-8.500 8.500" stroke="#4a4a4a" stroke-width="1"/><circle cx="102" cy="118.800" r="5.600" fill="#f6f6f6" stroke="#22398c" stroke-width="1.900"/><path d="M99 119.500h5M101.500 116v5.500" stroke="#e0a0a0" stroke-width=".7"/><path d="M102.300 119.300 L106.600 123.700" stroke="#f2a01c" stroke-width="1.900"/><circle cx="107.200" cy="124.300" r="1.100" fill="#e05050"/></svg><div style="left:560px;top:108px;width:160px;height:14.800px;overflow:hidden"><span style="left:46.7px;top:5px;font-size:12.8px;line-height:16px;letter-spacing:-0.336px;white-space:nowrap;color:#111">* park.dxf</span></div><div style="left:72px;top:132px;width:1083px;height:23px;background:#ececec"></div><div style="left:72px;top:155px;width:23.500px;height:577px;background:#ececec"></div><svg style="left:72px;top:132px" width="1083" height="612" viewBox="72 132 1083 612"><defs><clipPath id="hr"><rect x="95.500" y="132" width="1042.500" height="23"/></clipPath><clipPath id="vr"><rect x="72" y="155" width="24" height="576.500"/></clipPath></defs><g clip-path="url(#hr)" font-family="Liberation Sans, sans-serif" font-size="9.900" fill="#1a1a1a" text-anchor="middle"><text x="95.1" y="141">-28</text><text x="119.7" y="141">-26</text><text x="144.2" y="141">-24</text><text x="168.8" y="141">-22</text><text x="193.3" y="141">-20</text><text x="217.8" y="141">-18</text><text x="242.4" y="141">-16</text><text x="266.9" y="141">-14</text><text x="291.5" y="141">-12</text><text x="316.0" y="141">-10</text><text x="340.5" y="141">-8</text><text x="365.1" y="141">-6</text><text x="389.6" y="141">-4</text><text x="414.2" y="141">-2</text><text x="438.7" y="141">0</text><text x="463.2" y="141">2</text><text x="487.8" y="141">4</text><text x="512.3" y="141">6</text><text x="536.9" y="141">8</text><text x="561.4" y="141">10</text><text x="585.9" y="141">12</text><text x="610.5" y="141">14</text><text x="635.0" y="141">16</text><text x="659.6" y="141">18</text><text x="684.1" y="141">20</text><text x="708.6" y="141">22</text><text x="733.2" y="141">24</text><text x="757.7" y="141">26</text><text x="782.3" y="141">28</text><text x="806.8" y="141">30</text><text x="831.3" y="141">32</text><text x="855.9" y="141">34</text><text x="880.4" y="141">36</text><text x="905.0" y="141">38</text><text x="929.5" y="141">40</text><text x="954.0" y="141">42</text><text x="978.6" y="141">44</text><text x="1003.1" y="141">46</text><text x="1027.7" y="141">48</text><text x="1052.2" y="141">50</text><text x="1076.7" y="141">52</text><text x="1101.3" y="141">54</text><text x="1125.8" y="141">56</text><path d="M83.6 152.300v2.700M95.8 148v7M108.1 152.300v2.700M120.4 148v7M132.6 152.300v2.700M144.9 148v7M157.2 152.300v2.700M169.5 148v7M181.7 152.300v2.700M194.0 148v7M206.3 152.300v2.700M218.5 148v7M230.8 152.300v2.700M243.1 148v7M255.3 152.300v2.700M267.6 148v7M279.9 152.300v2.700M292.2 148v7M304.4 152.300v2.700M316.7 148v7M329.0 152.300v2.700M341.2 148v7M353.5 152.300v2.700M365.8 148v7M378.0 152.300v2.700M390.3 148v7M402.6 152.300v2.700M414.9 148v7M427.1 152.300v2.700M439.4 148v7M451.7 152.300v2.700M463.9 148v7M476.2 152.300v2.700M488.5 148v7M500.8 152.300v2.700M513.0 148v7M525.3 152.300v2.700M537.6 148v7M549.8 152.300v2.700M562.1 148v7M574.4 152.300v2.700M586.6 148v7M598.9 152.300v2.700M611.2 148v7M623.4 152.300v2.700M635.7 148v7M648.0 152.300v2.700M660.3 148v7M672.5 152.300v2.700M684.8 148v7M697.1 152.300v2.700M709.3 148v7M721.6 152.300v2.700M733.9 148v7M746.1 152.300v2.700M758.4 148v7M770.7 152.300v2.700M783.0 148v7M795.2 152.300v2.700M807.5 148v7M819.8 152.300v2.700M832.0 148v7M844.3 152.300v2.700M856.6 148v7M868.8 152.300v2.700M881.1 148v7M893.4 152.300v2.700M905.7 148v7M917.9 152.300v2.700M930.2 148v7M942.5 152.300v2.700M954.7 148v7M967.0 152.300v2.700M979.3 148v7M991.5 152.300v2.700M1003.8 148v7M1016.1 152.300v2.700M1028.4 148v7M1040.6 152.300v2.700M1052.9 148v7M1065.2 152.300v2.700M1077.4 148v7M1089.7 152.300v2.700M1102.0 148v7M1114.2 152.300v2.700M1126.5 148v7M1138.8 152.300v2.700" stroke="#3a3a3a" stroke-width=".8"/></g><g clip-path="url(#vr)" font-family="Liberation Sans, sans-serif" font-size="9.900" fill="#1a1a1a" text-anchor="middle"><text transform="translate(81.300,734.8) rotate(-90)" x="0" y="0">-16</text><text transform="translate(81.300,710.3) rotate(-90)" x="0" y="0">-14</text><text transform="translate(81.300,685.7) rotate(-90)" x="0" y="0">-12</text><text transform="translate(81.300,661.2) rotate(-90)" x="0" y="0">-10</text><text transform="translate(81.300,636.7) rotate(-90)" x="0" y="0">-8</text><text transform="translate(81.300,612.1) rotate(-90)" x="0" y="0">-6</text><text transform="translate(81.300,587.6) rotate(-90)" x="0" y="0">-4</text><text transform="translate(81.300,563.0) rotate(-90)" x="0" y="0">-2</text><text transform="translate(81.300,538.5) rotate(-90)" x="0" y="0">0</text><text transform="translate(81.300,514.0) rotate(-90)" x="0" y="0">2</text><text transform="translate(81.300,489.4) rotate(-90)" x="0" y="0">4</text><text transform="translate(81.300,464.9) rotate(-90)" x="0" y="0">6</text><text transform="translate(81.300,440.3) rotate(-90)" x="0" y="0">8</text><text transform="translate(81.300,415.8) rotate(-90)" x="0" y="0">10</text><text transform="translate(81.300,391.3) rotate(-90)" x="0" y="0">12</text><text transform="translate(81.300,366.7) rotate(-90)" x="0" y="0">14</text><text transform="translate(81.300,342.2) rotate(-90)" x="0" y="0">16</text><text transform="translate(81.300,317.6) rotate(-90)" x="0" y="0">18</text><text transform="translate(81.300,293.1) rotate(-90)" x="0" y="0">20</text><text transform="translate(81.300,268.6) rotate(-90)" x="0" y="0">22</text><text transform="translate(81.300,244.0) rotate(-90)" x="0" y="0">24</text><text transform="translate(81.300,219.5) rotate(-90)" x="0" y="0">26</text><text transform="translate(81.300,194.9) rotate(-90)" x="0" y="0">28</text><text transform="translate(81.300,170.4) rotate(-90)" x="0" y="0">30</text><path d="M92.800 747.1h2.700M88.500 734.8h7M92.800 722.5h2.700M88.500 710.3h7M92.800 698.0h2.700M88.500 685.7h7M92.800 673.5h2.700M88.500 661.2h7M92.800 648.9h2.700M88.500 636.7h7M92.800 624.4h2.700M88.500 612.1h7M92.800 599.9h2.700M88.500 587.6h7M92.800 575.3h2.700M88.500 563.0h7M92.800 550.8h2.700M88.500 538.5h7M92.800 526.2h2.700M88.500 514.0h7M92.800 501.7h2.700M88.500 489.4h7M92.800 477.1h2.700M88.500 464.9h7M92.800 452.6h2.700M88.500 440.3h7M92.800 428.1h2.700M88.500 415.8h7M92.800 403.5h2.700M88.500 391.3h7M92.800 379.0h2.700M88.500 366.7h7M92.800 354.5h2.700M88.500 342.2h7M92.800 329.9h2.700M88.500 317.6h7M92.800 305.4h2.700M88.500 293.1h7M92.800 280.8h2.700M88.500 268.6h7M92.800 256.3h2.700M88.500 244.0h7M92.800 231.8h2.700M88.500 219.5h7M92.800 207.2h2.700M88.500 194.9h7M92.800 182.7h2.700M88.500 170.4h7M92.800 158.1h2.700" stroke="#3a3a3a" stroke-width=".8"/></g><path d="M384 145.500 l10.500 0 l-5.250 6z" fill="#000"/><path d="M85.5 269.8 l0 10.5 l6 -5.25z" fill="#000"/></svg>
<div style="left:95.500px;top:155px;width:1042.500px;height:577px;background:#d3d3d3"></div><svg style="left:95.500px;top:155px" width="1042.500" height="577" viewBox="95.500 155 1042.500 577"><defs><clipPath id="cv"><rect x="95.500" y="155" width="1042.500" height="577"/></clipPath><pattern id="dots" x="438.9" y="538.0" width="12.27" height="12.27" patternUnits="userSpaceOnUse"><rect width="1" height="1" fill="#dcdcdc"/></pattern></defs><g clip-path="url(#cv)"><rect x="95" y="155" width="1046" height="578" fill="url(#dots)"/><path d="M71.3 538.500V733M71.3 150V733M194.0 538.500V733M194.0 150V733M316.7 538.500V733M316.7 150V733M439.4 538.500V733M439.4 150V733M562.1 538.500V733M684.8 538.500V733M807.5 538.500V733M930.2 538.500V733M1052.9 538.500V733M95 661.2H441M441 661.2H1141M95 538.5H441M441 538.5H1141M95 415.8H441M95 293.1H441M95 170.4H441" stroke="#d8d8d8" stroke-width="1" opacity=".7"/><rect x="438" y="150" width="647" height="390.300" fill="#c9c9c9"/><path d="M452.200 540 H1085 V150 H1096 V551.800 H452.200Z" fill="#808080"/><path d="M452.200 540 H1085 V150 H1096 V551.800 H452.200Z" fill="url(#dots)" opacity=".3"/><linearGradient id="pbot" x1="0" y1="0" x2="0" y2="1"><stop offset="0" stop-color="#ececec"/><stop offset="1" stop-color="#bdbdbd"/></linearGradient><rect x="440.700" y="537" width="641.300" height="3" fill="url(#pbot)"/><rect x="440.700" y="150" width="641.300" height="387" fill="#fff"/><path d="M562.1 150V537M684.8 150V537M807.5 150V537M930.2 150V537M1052.9 150V537M441 415.8H1082M441 293.1H1082M441 170.4H1082" stroke="#f2f2f2" stroke-width="1"/><path d="M470.400 150 V508.300 H1052.600 V150" fill="none" stroke="#8181ff" stroke-width="3.100" stroke-linejoin="round"/><path d="M409.400 277.600 L715.300 261 L794.300 549.800 L790.600 550.600 L712.800 267.300 L409.400 283.500" stroke="#111" stroke-width="1" fill="none"/><path d="M738.400 254.500 L808 508 Q820 550 823.800 572 Q826 595 810.500 632" stroke="#111" stroke-width="1" fill="none"/><path d="M796.600 580 L779.800 629.600 M799.400 581 L783 630.400 M796.600 580 L799.400 581" stroke="#111" stroke-width="1" fill="none"/><path d="M423.0 402.5C428.1 402.7 442.9 404.6 453.3 403.8C463.7 403.0 476.4 401.7 485.3 397.9C494.2 394.1 499.6 388.6 506.7 380.8C513.8 373.0 520.9 359.5 528.0 351.0C535.1 342.5 542.2 334.8 549.3 329.6C556.4 324.4 562.2 322.4 570.7 320.0C579.2 317.6 591.6 315.4 600.5 315.0C609.4 314.6 616.5 315.6 624.0 317.9C631.5 320.2 638.3 322.2 645.6 328.8C652.9 335.4 662.1 347.5 668.0 357.6C673.9 367.7 678.3 380.5 680.8 389.6C683.3 398.7 683.4 404.0 683.0 412.0C682.6 420.0 680.8 429.1 678.4 437.6C676.0 446.1 670.4 455.0 668.8 463.0C667.2 471.0 666.7 478.1 668.8 485.6C670.9 493.1 676.8 501.1 681.6 508.0C686.4 514.9 694.1 519.5 697.6 527.0C701.1 534.5 700.8 547.0 702.4 552.8C704.0 558.6 704.1 560.8 707.0 561.8C709.9 562.8 712.5 560.8 720.0 559.0C727.5 557.2 740.0 552.3 752.0 551.0C764.0 549.7 785.3 551.0 792.0 551.0" stroke="#d2a75f" stroke-width="1" fill="none"/><path d="M421.8 421.6C426.2 421.9 438.3 423.7 448.0 423.2C457.7 422.7 469.3 422.4 480.0 418.4C490.7 414.4 502.6 406.7 512.0 399.0C521.4 391.3 528.9 380.7 536.5 372.3C544.1 363.9 550.4 354.5 557.9 348.8C565.4 343.1 573.8 340.3 581.3 338.1C588.8 335.9 594.7 334.3 602.7 335.4C610.8 336.5 621.4 339.0 629.6 344.8C637.8 350.6 646.4 361.5 652.0 370.4C657.6 379.3 661.9 387.7 663.5 398.0C665.1 408.3 663.6 421.7 661.5 432.0C659.4 442.3 653.1 452.7 651.0 460.0C648.9 467.3 648.2 469.1 649.0 476.0C649.8 482.9 652.2 493.6 656.0 501.6C659.8 509.6 667.7 517.1 672.0 524.0C676.3 530.9 680.5 536.1 681.6 543.0C682.7 549.9 681.1 558.6 678.4 565.6C675.7 572.6 670.9 580.4 665.6 584.8C660.3 589.2 653.3 591.8 646.4 591.8C639.5 591.8 632.0 588.9 624.0 584.8C616.0 580.7 606.9 571.3 598.4 567.0C589.9 562.7 581.4 559.2 572.8 559.0C564.2 558.8 554.5 561.8 547.0 565.6C539.5 569.4 532.5 575.7 528.0 581.6C523.5 587.5 521.7 595.5 520.0 600.8C518.3 606.1 518.2 611.5 517.8 613.6" stroke="#d2a75f" stroke-width="1" fill="none"/><path d="M537.6 614.6C538.1 611.8 538.1 602.9 540.8 597.6C543.5 592.3 548.8 586.2 553.6 583.0C558.4 579.8 563.7 577.8 569.6 578.4C575.5 579.0 580.8 582.1 588.8 586.4C596.8 590.7 608.0 599.9 617.6 604.0C627.2 608.1 637.3 611.0 646.4 611.0C655.5 611.0 664.0 607.6 672.0 604.0C680.0 600.4 686.4 593.9 694.4 589.6C702.4 585.3 710.9 581.4 720.0 578.4C729.1 575.4 740.3 572.5 748.8 571.4C757.3 570.3 764.6 571.3 771.0 572.0C777.4 572.7 782.7 574.3 787.0 575.8C791.3 577.3 795.2 580.1 796.8 581.0" stroke="#d2a75f" stroke-width="1" fill="none"/><rect x="-15" y="-4.500" width="30" height="9" rx="2" fill="#c4c4c4" transform="translate(544,298.6) rotate(-25)"/><rect x="-15" y="-4.500" width="30" height="9" rx="2" fill="#c4c4c4" transform="translate(591.3,287) rotate(-2)"/><rect x="-15" y="-4.500" width="30" height="9" rx="2" fill="#c4c4c4" transform="translate(639,295) rotate(22)"/><rect x="-15" y="-4.500" width="30" height="9" rx="2" fill="#c4c4c4" transform="translate(680,323) rotate(48)"/><rect x="-15" y="-4.500" width="30" height="9" rx="2" fill="#c4c4c4" transform="translate(706.4,364) rotate(72)"/><rect x="-15" y="-4.500" width="30" height="9" rx="2" fill="#c4c4c4" transform="translate(712.7,413.5) rotate(86)"/><rect x="-15" y="-4.200" width="30" height="8.400" rx="2" fill="#c8c8c8" transform="translate(574.400,543.800) rotate(3)"/><circle cx="661.5" cy="307.5" r="3.300" fill="none" stroke="#111" stroke-width="1.400"/><path d="M662.0 304.2v-1.600" stroke="#111" stroke-width="1.200"/><circle cx="602.3" cy="545.3" r="3.300" fill="none" stroke="#111" stroke-width="1.400"/><path d="M602.8 542.0v-1.600" stroke="#111" stroke-width="1.200"/><circle cx="779.8" cy="543" r="3.300" fill="none" stroke="#111" stroke-width="1.400"/><path d="M780.3 539.7v-1.600" stroke="#111" stroke-width="1.200"/><path d="M518.7 350.4 L518.6 352.8 L516.0 354.2 L515.1 357.3 L515.7 358.2 L514.6 360.5 L516.0 363.3 L514.0 365.9 L512.6 366.4 L510.2 368.4 L508.7 368.5 L506.4 369.7 L504.8 370.3 L501.3 371.3 L500.6 371.0 L497.2 371.2 L496.4 371.8 L493.9 371.5 L492.0 371.4 L488.8 370.4 L488.6 368.4 L486.6 367.2 L483.9 367.9 L481.5 365.7 L481.0 364.4 L478.9 361.4 L478.6 360.8 L477.0 357.4 L478.0 356.5 L477.2 353.1 L477.0 352.5 L476.9 348.8 L475.3 348.1 L475.8 345.5 L478.9 344.6 L479.8 342.3 L477.7 339.4 L479.5 336.7 L481.3 336.5 L483.3 334.5 L484.7 333.9 L487.1 332.3 L488.5 332.2 L491.4 331.1 L492.1 329.9 L495.8 329.3 L496.4 328.9 L500.2 329.1 L500.8 328.5 L504.7 329.5 L504.9 330.3 L507.3 331.3 L509.2 331.6 L512.3 334.0 L512.8 334.2 L515.1 336.7 L515.2 338.0 L516.6 340.4 L517.7 341.7 L518.8 344.8 L517.0 346.3 L517.4 348.6ZM505.5 367.2 L505.4 369.7 L504.7 371.3 L503.8 374.6 L505.7 376.1 L504.6 378.5 L502.7 379.6 L501.3 381.6 L500.3 383.3 L498.2 385.3 L497.4 386.8 L493.9 388.8 L492.8 387.7 L489.2 389.0 L488.6 388.3 L486.2 388.7 L484.5 390.1 L482.1 390.0 L480.4 388.2 L477.7 387.7 L476.0 388.9 L473.5 387.9 L473.1 385.1 L470.4 383.2 L469.2 383.6 L466.7 381.0 L464.5 382.1 L462.8 379.5 L463.6 377.4 L462.4 374.6 L461.3 373.7 L460.6 370.5 L460.8 369.4 L460.8 366.1 L459.3 364.9 L459.9 361.6 L462.2 361.0 L463.4 357.8 L464.4 357.4 L465.8 355.1 L464.3 352.1 L466.6 349.6 L468.6 350.1 L470.5 348.6 L472.4 348.1 L475.2 346.7 L476.7 347.8 L479.6 347.1 L480.2 344.5 L482.7 344.2 L484.5 344.3 L487.6 344.6 L488.9 344.7 L491.7 345.6 L493.1 346.0 L496.3 347.8 L495.4 350.5 L497.1 351.9 L500.2 351.2 L502.7 354.3 L501.5 355.6 L502.9 358.2 L504.6 358.7 L505.5 361.5 L505.0 363.1 L505.3 365.8ZM491.3 362.7 L491.2 365.2 L490.1 366.9 L489.2 370.3 L488.0 370.7 L486.8 373.0 L487.5 375.3 L485.7 377.5 L483.0 377.0 L480.8 378.8 L480.8 381.1 L478.6 382.3 L476.4 381.7 L473.8 382.5 L472.7 384.7 L469.5 384.9 L468.2 385.0 L465.5 384.7 L464.2 382.4 L461.2 381.3 L459.5 382.8 L456.7 381.2 L457.1 378.4 L455.3 376.9 L453.3 376.4 L451.7 374.3 L450.0 373.4 L448.4 370.0 L450.5 368.6 L449.8 366.1 L447.3 364.9 L447.2 361.4 L447.3 360.4 L447.8 357.5 L450.6 356.8 L451.6 354.4 L450.0 351.9 L451.6 349.5 L453.9 349.4 L455.9 347.3 L456.7 346.3 L459.1 344.7 L459.4 342.4 L461.9 341.3 L464.5 344.2 L467.9 343.6 L468.2 340.3 L472.3 340.4 L472.5 342.2 L476.1 343.1 L477.2 341.5 L479.8 342.6 L480.9 344.1 L483.9 346.3 L484.2 347.0 L486.4 349.4 L485.9 351.1 L487.3 353.5 L487.7 354.8 L488.5 357.0 L490.2 358.4 L490.6 361.2ZM488.8 339.6 L488.4 343.6 L488.2 344.1 L487.1 347.4 L484.0 347.1 L482.4 349.8 L482.3 350.7 L480.6 352.6 L480.6 354.9 L477.9 356.6 L476.5 356.4 L473.0 357.7 L472.7 358.4 L469.8 358.9 L468.4 357.7 L465.0 357.4 L464.2 358.0 L460.9 356.9 L460.4 356.2 L458.2 355.0 L456.5 354.5 L454.0 352.0 L454.5 350.7 L452.7 348.0 L450.1 348.5 L448.8 344.9 L448.9 344.1 L448.5 341.6 L449.1 339.6 L449.4 336.0 L451.5 335.8 L452.2 333.4 L452.1 331.8 L453.6 329.2 L453.8 328.0 L455.9 325.8 L456.0 324.1 L458.0 322.7 L460.9 323.9 L463.0 323.1 L464.5 322.4 L466.7 322.1 L468.4 319.1 L472.3 319.5 L472.3 322.6 L475.0 323.4 L476.3 323.1 L478.7 324.5 L479.9 325.2 L482.2 327.4 L483.4 327.6 L485.1 330.1 L484.5 331.9 L485.5 334.4 L485.6 335.7 L486.0 338.6ZM507.9 337.5 L507.7 340.6 L508.9 341.9 L508.1 344.8 L507.6 346.1 L506.0 349.1 L504.3 349.2 L502.5 351.4 L501.7 352.5 L499.0 354.5 L498.2 354.7 L495.2 356.1 L494.4 356.5 L491.8 357.2 L490.3 357.7 L487.0 357.7 L486.3 356.0 L483.6 355.5 L482.1 356.4 L478.8 355.0 L477.3 356.3 L474.8 354.6 L473.7 353.5 L471.2 350.8 L472.6 348.8 L471.1 346.4 L471.0 345.1 L470.0 342.0 L467.9 341.8 L467.5 338.1 L467.0 337.5 L467.3 334.0 L467.6 333.1 L468.6 330.0 L471.1 329.9 L472.5 327.3 L473.3 326.7 L474.8 324.9 L474.0 321.7 L476.0 320.2 L478.9 321.3 L480.9 320.3 L481.5 317.0 L484.2 316.3 L486.3 319.1 L489.5 319.1 L490.2 318.8 L493.4 319.4 L494.6 317.7 L498.0 319.1 L499.1 318.6 L501.9 320.5 L502.4 321.7 L504.2 323.5 L505.3 325.0 L507.0 327.8 L507.4 329.0 L508.3 331.4 L508.8 333.1 L509.3 336.9ZM497.7 363.7 L497.4 365.8 L498.0 366.8 L497.0 368.6 L495.3 368.6 L493.9 369.7 L493.4 371.0 L490.9 371.5 L490.4 371.1 L488.4 370.8 L487.5 370.5 L485.8 369.6 L485.1 369.0 L484.0 367.6 L483.3 366.6 L482.7 364.0 L482.9 363.7 L483.2 361.3 L483.9 361.0 L485.0 359.1 L484.6 357.9 L486.6 356.4 L487.4 356.6 L489.5 356.0 L490.4 355.7 L493.0 356.2 L493.0 357.2 L494.4 358.0 L496.1 357.9 L497.7 360.2 L497.5 360.7 L498.0 362.8ZM476.0 354.6 L475.8 356.4 L475.6 357.4 L474.6 359.3 L474.5 360.1 L473.2 361.4 L472.8 362.8 L470.2 364.0 L469.6 363.2 L467.3 363.5 L466.6 363.7 L464.1 363.2 L463.6 363.4 L461.8 362.4 L461.5 361.0 L460.4 359.8 L459.2 359.0 L458.4 357.1 L458.9 356.0 L458.8 354.1 L458.6 353.1 L459.3 350.8 L459.9 350.5 L461.4 348.5 L461.1 347.7 L463.0 346.4 L463.7 346.1 L466.2 345.4 L466.6 344.5 L469.1 344.6 L469.7 345.5 L472.0 346.5 L473.0 346.0 L474.8 347.5 L475.3 348.5 L476.7 351.0 L476.2 351.6 L476.6 353.5ZM495.3 339.2 L494.9 341.9 L495.1 342.7 L493.5 345.3 L492.1 344.6 L490.7 345.7 L489.6 346.3 L487.9 346.8 L486.7 347.8 L483.9 347.3 L483.3 347.5 L481.4 346.4 L480.5 345.5 L479.1 343.7 L479.4 342.3 L478.8 339.9 L479.5 339.2 L479.7 337.6 L478.6 335.9 L479.7 333.9 L481.2 333.7 L483.1 332.4 L483.5 331.4 L485.3 330.9 L486.7 331.5 L488.9 331.8 L489.8 331.8 L491.6 332.7 L492.6 333.4 L494.3 335.7 L494.0 336.2 L494.6 338.4Z" fill="none" stroke="#5e9a2e" stroke-width=".7" stroke-linejoin="round"/><path d="M494.7 355.2L504.8 355.1M504.8 355.1L508.3 353.1M504.8 355.1L509.0 357.6M494.7 355.2L501.0 362.5M501.0 362.5L506.0 365.3M501.0 362.5L502.6 368.4M483.2 364.3L485.0 372.8M485.0 372.8L487.5 377.5M485.0 372.8L484.1 378.7M483.2 364.3L476.8 370.5M476.8 370.5L474.1 375.5M476.8 370.5L472.8 371.9M473.0 354.3L468.4 359.9M468.4 359.9L466.4 365.4M468.4 359.9L463.5 362.2M473.0 354.3L464.7 352.6M464.7 352.6L460.5 353.2M464.7 352.6L459.5 349.9M480.7 341.8L476.0 335.7M476.0 335.7L470.6 332.3M476.0 335.7L474.0 330.8M480.7 341.8L481.9 332.3M481.9 332.3L480.9 327.6M481.9 332.3L484.5 327.5M493.3 346.3L498.6 340.7M498.6 340.7L500.5 337.1M498.6 340.7L504.2 338.8M493.3 346.3L500.7 345.4M500.7 345.4L505.9 342.6M500.7 345.4L506.3 347.6" fill="none" stroke="#5e9a2e" stroke-width=".7" stroke-linecap="round"/><path d="M484.1 354.5 L490.0 354.7 L494.7 355.2 L490.4 352.7 L484.9 350.5ZM482.4 352.6 L483.7 359.1 L483.2 364.3 L485.8 359.1 L486.6 352.4ZM484.4 350.4 L478.0 351.7 L473.0 354.3 L478.1 353.8 L484.6 354.6ZM486.4 351.7 L482.9 346.3 L480.7 341.8 L481.0 347.2 L482.6 353.3ZM485.9 354.0 L489.7 349.4 L493.3 346.3 L488.3 347.8 L483.1 351.0Z" fill="#5e9a2e" stroke="#5e9a2e" stroke-width=".4" stroke-linejoin="round"/><ellipse cx="484.5" cy="352.5" rx="3.2" ry="2.6" fill="#5e9a2e"/><path d="M734.9 484.0 L734.6 487.2 L733.2 488.0 L732.4 490.8 L733.5 492.5 L731.7 495.7 L729.7 495.2 L728.0 497.2 L727.0 498.1 L724.4 500.1 L724.9 502.4 L722.6 503.5 L721.2 505.2 L717.1 506.1 L716.5 505.0 L713.1 505.1 L712.2 503.1 L710.0 502.8 L707.9 503.6 L705.6 502.7 L704.5 500.8 L702.4 499.3 L701.7 497.9 L699.7 495.9 L697.8 495.9 L695.9 492.8 L695.4 492.3 L694.3 489.2 L694.1 488.2 L693.7 484.9 L693.8 484.0 L694.0 481.2 L692.3 479.3 L693.6 475.3 L694.3 475.1 L696.1 471.9 L698.2 472.3 L699.8 470.2 L701.0 469.2 L702.9 467.8 L703.5 465.3 L706.3 463.9 L707.5 463.2 L710.5 462.4 L711.9 461.8 L715.9 461.7 L716.2 465.3 L718.6 465.7 L721.1 462.9 L724.1 464.2 L725.4 464.6 L728.1 466.4 L727.0 469.8 L729.1 472.1 L731.7 471.3 L733.3 473.7 L731.7 476.2 L732.6 478.7 L736.1 479.3 L736.5 483.1ZM718.7 490.3 L718.5 493.0 L717.4 494.5 L716.6 497.4 L714.9 498.0 L713.3 500.8 L712.7 501.2 L710.7 503.5 L710.0 504.1 L707.8 505.7 L706.9 506.5 L704.6 507.6 L703.9 510.6 L700.2 511.3 L699.3 509.0 L695.8 508.8 L695.3 508.4 L692.6 507.8 L690.6 509.5 L687.5 507.9 L688.2 505.2 L685.5 503.0 L684.9 502.9 L683.3 501.0 L680.8 500.8 L679.5 498.2 L680.6 496.3 L680.0 494.0 L680.4 492.2 L680.3 489.3 L679.9 488.3 L680.5 485.3 L680.3 484.2 L681.4 481.6 L680.3 479.4 L682.2 476.8 L684.0 476.8 L686.7 474.4 L688.0 475.1 L690.1 473.9 L690.6 470.9 L694.2 469.9 L695.3 472.0 L697.7 471.8 L699.4 470.1 L703.2 470.6 L703.2 472.6 L706.5 473.9 L708.0 472.0 L710.9 473.8 L710.7 475.7 L712.4 477.4 L712.4 479.5 L714.2 482.4 L715.1 482.5 L716.2 485.5 L716.4 486.3 L716.8 489.6ZM703.1 472.0 L703.0 474.4 L704.4 476.2 L703.3 479.7 L703.2 480.3 L701.9 482.8 L701.8 484.7 L700.0 486.8 L696.6 485.6 L694.6 487.1 L694.2 489.1 L692.0 490.1 L690.0 489.7 L687.3 490.3 L686.1 491.8 L683.6 491.7 L682.0 490.8 L678.5 489.9 L677.2 491.7 L674.0 490.1 L673.7 488.7 L671.1 486.6 L671.8 484.5 L670.3 482.8 L669.7 481.2 L668.3 478.1 L665.8 478.4 L665.0 474.6 L667.3 473.9 L667.2 470.9 L665.7 469.8 L666.3 466.5 L667.1 465.9 L668.6 462.5 L669.6 462.6 L671.3 460.3 L670.2 457.9 L673.1 455.4 L673.6 455.0 L676.7 453.3 L677.4 452.8 L681.2 451.7 L682.0 453.1 L685.2 452.9 L686.2 451.0 L690.0 451.6 L690.2 453.4 L693.5 454.6 L694.8 453.5 L697.7 455.3 L698.0 456.7 L700.1 458.8 L700.9 459.9 L702.7 462.7 L701.5 464.3 L702.5 467.2 L705.9 467.4 L706.4 471.3ZM719.1 457.5 L718.7 461.1 L717.4 461.5 L716.4 464.6 L715.9 465.2 L714.4 467.8 L715.2 469.5 L713.4 471.6 L712.7 473.2 L710.1 475.1 L708.9 475.5 L705.3 477.0 L704.4 475.9 L702.2 476.3 L700.4 476.7 L697.1 476.6 L696.3 476.1 L693.9 475.6 L691.4 477.4 L688.2 475.8 L688.3 473.8 L685.4 471.5 L685.3 470.8 L683.3 468.2 L683.2 467.2 L681.9 464.7 L679.4 464.2 L678.5 460.4 L678.2 459.8 L678.1 456.7 L679.2 455.3 L679.8 452.5 L681.7 451.6 L682.8 448.9 L681.2 446.6 L683.5 443.5 L684.3 443.3 L687.3 440.7 L688.6 441.7 L690.8 440.4 L692.0 439.1 L694.7 438.3 L696.3 438.8 L699.1 438.6 L700.5 437.1 L703.6 437.6 L704.5 438.9 L707.8 440.2 L709.5 438.4 L712.3 440.1 L711.3 443.5 L712.9 445.0 L716.3 444.6 L717.7 446.8 L718.1 448.8 L719.3 452.0 L718.2 453.4 L718.6 456.8ZM733.8 461.9 L733.6 464.7 L731.0 465.8 L730.4 468.0 L731.2 470.3 L729.6 473.0 L728.9 474.0 L726.5 476.5 L726.2 477.6 L722.8 479.7 L722.2 479.6 L719.6 480.6 L717.9 480.3 L715.3 480.7 L713.7 479.2 L710.9 479.0 L709.3 481.1 L706.7 480.3 L705.8 478.3 L703.4 476.9 L701.4 477.3 L699.0 475.1 L698.5 474.0 L696.6 471.0 L696.9 470.0 L695.7 466.7 L693.8 466.4 L693.4 463.8 L693.2 461.9 L693.5 458.2 L696.4 457.9 L697.2 455.2 L696.2 453.4 L698.1 450.2 L699.1 450.3 L701.3 448.0 L701.0 446.0 L704.2 443.9 L704.8 443.4 L707.8 442.2 L709.3 442.8 L712.0 442.4 L713.7 442.1 L717.4 442.5 L718.0 442.9 L721.3 444.0 L721.5 445.6 L724.5 447.5 L726.5 445.7 L729.5 448.6 L728.6 450.0 L730.6 452.9 L730.2 453.9 L731.5 457.3 L733.4 457.4 L733.8 460.4ZM708.6 488.1 L708.3 490.2 L708.6 491.2 L707.4 493.1 L705.8 492.8 L704.0 494.0 L703.7 494.3 L701.5 494.8 L701.1 495.0 L699.3 494.8 L698.0 495.6 L696.3 494.7 L696.2 492.9 L695.0 491.4 L693.6 491.1 L693.0 488.5 L693.1 488.1 L693.6 485.3 L694.1 485.1 L695.5 482.9 L696.3 483.2 L697.6 482.2 L698.2 481.0 L700.0 480.5 L701.1 480.0 L703.5 480.4 L704.0 481.0 L706.2 482.3 L706.6 482.6 L707.8 484.2 L707.9 485.2 L708.5 487.6ZM698.5 466.6 L698.2 469.1 L699.9 470.2 L698.7 472.5 L697.4 472.7 L696.0 474.2 L694.9 474.8 L692.8 475.9 L692.0 476.3 L690.2 476.6 L688.6 477.5 L686.1 477.0 L685.7 475.3 L683.5 473.9 L682.8 473.9 L681.3 472.1 L680.5 471.5 L679.8 469.7 L679.8 468.2 L679.7 466.0 L678.8 464.8 L679.7 461.8 L681.5 462.3 L682.7 460.5 L683.6 460.2 L685.2 459.0 L685.3 457.0 L688.2 456.2 L688.7 457.0 L690.8 457.0 L691.7 457.9 L693.8 458.8 L695.4 457.6 L697.1 458.9 L697.8 460.2 L698.8 461.8 L698.0 463.7 L698.4 465.5ZM722.6 467.3 L722.4 469.4 L722.8 470.6 L721.9 472.3 L721.3 473.6 L719.9 475.0 L718.5 475.3 L716.6 476.1 L715.3 475.7 L713.2 475.8 L712.3 476.2 L710.3 475.6 L709.4 475.1 L707.6 473.7 L707.5 472.7 L706.5 471.2 L705.0 470.6 L704.4 468.1 L704.6 467.3 L705.0 464.6 L705.0 464.1 L706.3 461.6 L707.3 461.8 L709.1 460.2 L708.9 458.7 L711.7 457.7 L712.4 458.7 L714.4 458.6 L715.6 457.3 L717.8 457.9 L719.1 458.3 L721.5 460.3 L720.2 462.0 L721.3 463.5 L723.0 464.0 L723.5 466.1Z" fill="none" stroke="#5e9a2e" stroke-width=".7" stroke-linejoin="round"/><path d="M710.0 487.3L716.8 489.5M716.8 489.5L722.5 489.1M716.8 489.5L720.4 491.8M710.0 487.3L712.2 497.1M712.2 497.1L715.0 500.0M712.2 497.1L711.1 503.0M694.9 487.0L693.1 493.8M693.1 493.8L693.2 499.2M693.1 493.8L689.9 498.1M694.9 487.0L689.1 491.5M689.1 491.5L685.6 496.6M689.1 491.5L682.7 492.2M693.4 474.2L684.0 472.8M684.0 472.8L679.0 473.8M684.0 472.8L679.7 470.2M693.4 474.2L690.1 468.3M690.1 468.3L685.0 464.8M690.1 468.3L689.1 463.4M704.2 467.5L701.8 459.3M701.8 459.3L698.5 453.8M701.8 459.3L702.9 453.6M704.2 467.5L709.4 460.2M709.4 460.2L710.8 454.9M709.4 460.2L715.1 456.7M712.4 479.4L721.7 477.1M721.7 477.1L725.3 473.8M721.7 477.1L727.8 478.8M712.4 479.4L719.1 486.1M719.1 486.1L723.8 487.6M719.1 486.1L720.3 489.8" fill="none" stroke="#5e9a2e" stroke-width=".7" stroke-linecap="round"/><path d="M700.6 479.3 L705.6 483.9 L710.0 487.3 L707.2 482.6 L703.8 476.8ZM700.8 476.6 L697.0 481.9 L694.9 487.0 L698.4 483.3 L703.7 479.5ZM702.8 476.1 L697.3 475.6 L693.4 474.2 L696.8 477.6 L701.7 480.0ZM704.2 478.6 L704.9 472.6 L704.2 467.5 L702.9 472.1 L700.3 477.5ZM702.2 480.1 L708.0 479.1 L712.4 479.4 L707.9 477.0 L702.2 476.0Z" fill="#5e9a2e" stroke="#5e9a2e" stroke-width=".4" stroke-linejoin="round"/><ellipse cx="702.2" cy="478.1" rx="3.1" ry="2.5" fill="#5e9a2e"/><path d="M615.5 379.8 L615.8 381.0 L615.9 382.2 L616.1 383.4 L615.5 384.5 L615.7 385.7 L613.2 386.3 L614.0 387.7 L614.9 389.2 L613.7 390.0 L613.9 391.4 L611.6 391.6 L611.9 393.0 L610.9 393.7 L611.0 395.1 L610.4 396.1 L608.6 396.2 L608.3 397.4 L607.7 398.4 L608.2 400.3 L607.1 400.9 L605.2 400.5 L605.4 402.5 L603.4 401.9 L603.3 403.6 L601.6 403.2 L600.5 403.5 L600.7 406.0 L598.8 405.1 L597.8 405.5 L597.6 407.8 L596.4 408.0 L594.8 406.9 L594.2 408.9 L592.8 408.2 L591.7 408.7 L590.4 407.7 L589.5 409.8 L588.2 409.2 L587.1 410.0 L585.9 409.8 L584.8 408.2 L583.7 408.3 L582.6 407.7 L581.5 407.5 L580.5 407.1 L579.2 407.4 L577.9 407.9 L577.3 406.0 L575.7 407.3 L574.9 406.1 L573.9 405.5 L572.3 406.2 L571.7 404.9 L571.0 403.9 L569.8 403.7 L568.5 403.5 L568.7 401.4 L566.2 402.5 L567.1 399.9 L564.9 400.5 L563.9 399.8 L564.8 397.5 L562.6 397.9 L562.8 396.3 L561.7 395.6 L562.3 393.9 L561.7 393.0 L560.9 392.2 L558.6 392.0 L560.0 390.1 L558.2 389.6 L557.4 388.6 L557.0 387.5 L558.3 386.0 L558.0 384.9 L557.4 383.8 L556.6 382.7 L558.3 381.5 L556.6 380.4 L556.4 379.2 L556.3 378.0 L558.5 377.1 L556.3 375.6 L558.7 374.9 L558.3 373.6 L557.9 372.4 L557.4 371.0 L559.2 370.4 L558.2 368.8 L559.6 368.1 L560.6 367.3 L561.1 366.3 L562.0 365.5 L562.8 364.7 L563.2 363.7 L562.8 361.9 L562.9 360.5 L565.3 361.0 L566.2 360.4 L565.3 357.9 L567.0 358.0 L568.1 357.5 L569.2 357.1 L569.6 355.7 L570.3 354.6 L571.8 354.8 L572.8 354.3 L574.2 354.7 L574.3 352.1 L576.3 353.9 L576.9 352.3 L577.8 351.1 L579.3 352.6 L580.1 350.8 L581.2 350.1 L582.4 350.7 L583.6 350.2 L584.8 351.9 L585.9 351.0 L587.0 351.7 L588.3 350.0 L589.3 351.5 L590.5 351.2 L591.9 350.0 L592.9 350.6 L594.2 350.6 L594.9 352.3 L596.0 352.5 L597.3 352.4 L598.1 353.4 L598.9 354.4 L600.1 354.6 L600.7 355.8 L602.0 355.9 L603.8 355.2 L604.8 356.0 L605.1 357.4 L605.8 358.4 L606.3 359.5 L606.6 360.7 L607.7 361.3 L609.5 361.3 L610.4 362.1 L610.0 363.8 L611.5 364.2 L612.1 365.2 L612.5 366.3 L612.9 367.4 L613.6 368.4 L613.1 369.8 L614.3 370.6 L613.5 372.0 L614.4 373.0 L615.3 374.0 L615.3 375.2 L614.5 376.4 L616.3 377.4 L615.6 378.6ZM610.4 388.6L609.3 389.4L609.2 390.8L609.8 392.1M608.9 389.3L609.6 390.3L611.0 389.7L612.5 391.3M612.9 370.8L613.0 370.9L611.5 372.4L613.4 372.3M589.5 353.4L590.4 354.4L589.0 355.6L589.3 356.3M610.4 367.5L611.0 368.5L608.9 367.0L608.6 367.6M600.1 399.2L600.9 399.8L598.9 399.7L597.7 397.7M601.1 398.2L599.8 396.1L599.6 395.6L600.1 396.0M600.4 399.1L602.2 396.9L601.8 396.0L601.4 394.3M602.0 396.3L602.5 394.5L602.7 393.8L603.1 395.8M613.1 374.8L612.8 376.2L613.4 375.6L611.8 376.0M594.2 352.7L594.7 352.1L596.4 349.9L594.7 350.2M611.3 372.4L609.7 373.0L611.5 372.5L611.2 371.2M611.0 378.1L613.0 379.9L613.4 378.9L615.5 378.9M567.9 396.8L567.1 399.0L567.0 398.0L566.9 396.4M610.3 376.5L611.5 377.9L609.4 378.1L608.4 380.0M613.2 376.8L612.1 375.7L610.5 377.9L609.6 378.4M607.5 364.7L608.6 363.0L609.7 362.2L609.9 361.4M606.0 394.0L606.1 393.8L605.5 394.9L605.9 392.9M611.5 391.6L613.2 391.8L611.1 393.1L610.8 393.4M593.9 405.4L594.5 405.3L596.3 404.8L595.9 406.3M607.9 396.6L606.0 398.0L606.9 397.8L605.9 399.0M600.2 403.9L598.7 403.8L598.9 403.8L598.1 402.3M603.4 364.5L602.2 365.9L603.5 366.6L601.4 367.6M613.6 372.7L615.8 373.6L613.8 375.1L612.6 375.7M586.0 403.2L585.0 405.0L583.5 405.5L583.1 404.0M612.3 382.4L610.3 380.7L609.8 378.8L607.8 379.1M608.0 388.4L607.7 387.6L608.1 387.5L610.0 387.0M596.9 359.5L597.7 357.9L598.3 358.0L600.1 358.2M612.0 380.4L610.9 381.5L611.0 379.9L609.8 379.4M613.1 381.0L611.7 382.0L612.3 380.2L613.1 378.4M595.7 401.8L597.4 401.7L596.6 403.1L594.5 404.0M595.3 400.8L593.8 402.8L594.6 401.6L592.9 403.7M608.9 373.8L609.4 373.2L608.2 372.5L608.7 371.8M604.4 362.9L602.8 364.4L603.5 365.7L603.2 367.3M608.3 366.3L609.4 365.8L607.6 363.7L606.3 361.7M612.4 389.1L612.3 390.2L610.1 390.1L611.8 390.6M608.3 372.8L606.8 371.3L606.2 370.8L607.9 369.3M602.7 397.3L601.8 395.8L600.8 394.7L600.7 392.6M599.2 404.7L600.0 405.4L599.9 407.4L598.2 408.1M610.3 382.7L611.1 383.8L609.6 382.4L607.5 381.2M598.5 405.2L597.9 404.4L597.8 403.5L598.8 404.4M602.5 396.8L601.3 397.6L603.3 398.2L603.0 400.3M606.7 397.6L606.3 395.6L606.5 397.8L606.6 397.1M607.0 390.1L605.1 391.8L605.0 393.8L603.1 392.6M595.2 400.9L594.1 400.5L593.3 398.5L591.3 400.6M604.5 394.8L604.6 394.3L604.7 392.5L603.9 390.8M596.1 355.6L597.6 354.4L595.5 354.6L595.5 354.9M611.0 380.0L611.6 381.0L613.4 380.2L613.1 381.6M607.5 391.7L605.7 392.9L607.1 392.1L605.5 390.3M602.7 397.3L600.8 397.0L601.2 395.9L599.2 396.8M600.7 399.2L600.2 397.5L599.8 396.7L601.0 396.9M609.2 395.5L609.9 396.6L610.2 396.4L611.6 397.1M585.1 406.5L584.1 407.8L583.6 406.2L581.7 404.8M610.2 382.5L611.0 381.5L609.0 382.7L609.3 380.6M602.9 398.0L604.5 399.9L605.0 398.7L604.7 398.1M606.8 393.1L604.7 393.5L606.1 394.5L604.3 394.6M599.6 401.2L601.5 402.4L599.9 401.6L601.7 401.5M588.3 404.9L588.0 406.0L590.0 406.2L592.0 406.6M586.8 404.8L584.9 406.9L582.8 407.3L582.7 409.0M593.3 403.7L592.0 402.7L590.7 403.0L590.1 404.1M607.5 391.1L609.6 392.6L611.1 393.1L610.7 391.5M597.5 404.8L597.4 402.8L596.0 401.0L596.9 402.8M602.0 398.5L602.8 400.1L603.4 401.4L602.8 399.3M582.3 405.1L582.7 403.7L582.2 402.9L580.2 402.1M612.5 375.0L612.0 377.1L613.4 379.0L614.3 379.7M599.6 401.8L600.9 401.2L601.3 401.9L601.4 401.0M604.5 396.3L604.9 397.5L605.8 396.6L607.7 395.6M608.3 394.9L606.4 396.0L607.2 398.1L608.9 398.9M598.1 403.1L596.9 403.2L598.6 402.0L600.7 402.2M606.8 365.9L604.6 365.4L603.2 366.0L605.0 367.8M609.3 377.2L610.1 377.5L611.1 376.9L612.8 375.6M610.6 378.9L609.6 379.5L611.3 378.0L611.9 379.2M609.0 392.1L610.5 393.7L611.5 393.4L611.1 393.5M607.2 398.1L606.3 397.1L606.8 399.2L605.4 397.1M596.4 403.9L595.0 402.5L595.4 403.1L596.2 404.1M610.6 389.7L611.8 391.4L611.2 392.6M569.1 357.8L568.2 358.5L569.4 358.4M606.6 394.8L605.4 393.3L604.1 393.7M607.8 396.5L608.6 397.7L609.7 398.4M611.1 367.0L611.5 368.6L610.1 367.2M609.5 389.8L609.1 389.6L609.7 390.5M608.7 392.9L608.9 392.4L607.5 392.8M567.2 399.0L567.1 400.6L568.7 399.1M587.9 352.7L587.1 351.3L587.1 350.8M584.0 352.0L583.6 351.3L583.6 352.0M592.7 353.9L591.9 353.4L593.2 353.4M611.0 387.9L610.1 388.5L608.5 387.7M607.9 394.7L609.6 394.9L609.2 396.4M607.9 393.9L609.0 392.1L610.0 391.6M611.6 382.4L611.4 382.0L611.5 380.4M591.7 407.3L591.5 407.2L590.0 406.4M612.2 372.2L612.2 370.6L611.8 371.6M561.7 390.5L563.2 391.0L563.6 389.3M613.2 383.9L612.9 385.2L614.1 386.7M565.9 399.2L566.8 400.7L565.5 401.7M561.5 393.0L563.2 392.0L563.0 391.1M561.0 384.6L561.6 383.3L560.4 383.1M609.4 391.4L610.9 392.8L609.8 391.1M599.4 355.1L599.8 353.8L598.8 355.3M609.1 370.3L607.9 370.1L607.1 371.0M567.1 399.4L565.9 399.5L567.6 400.2M594.9 383.3L594.7 383.1L596.0 383.7L596.6 384.6L597.8 386.9L598.0 388.0M582.7 389.9L583.0 391.0L584.6 390.9L585.5 392.5L585.0 394.2L585.7 395.2M587.7 397.8L588.9 399.6L588.6 400.5L588.2 401.1L588.7 400.7L589.1 401.5M593.5 395.8L594.8 397.9L595.4 399.0L597.0 401.2L599.2 403.6L599.6 403.5" fill="none" stroke="#5e9a2e" stroke-width=".7" stroke-linejoin="round"/><path d="M557.3 488.0 L557.3 489.2 L556.4 490.3 L555.7 491.4 L554.8 492.4 L556.4 493.8 L555.6 494.8 L556.1 496.1 L554.8 496.9 L555.4 498.3 L553.8 498.9 L554.6 500.5 L553.9 501.5 L552.6 502.1 L552.3 503.3 L552.1 504.5 L550.3 504.7 L550.4 506.2 L550.2 507.5 L548.4 507.4 L548.6 509.2 L547.6 509.8 L547.0 510.9 L545.2 510.6 L544.0 510.8 L544.1 513.0 L543.2 513.6 L541.7 513.4 L540.2 513.1 L539.4 513.9 L538.8 515.4 L537.4 515.0 L536.9 517.0 L535.5 516.5 L534.2 515.8 L533.3 517.2 L532.1 516.7 L531.1 518.4 L530.0 518.4 L528.7 517.5 L527.6 517.9 L526.4 518.0 L525.2 518.3 L524.0 518.6 L523.2 516.0 L521.9 516.7 L520.7 517.1 L519.8 516.1 L518.5 516.5 L517.8 514.9 L516.0 516.5 L515.3 515.1 L514.7 513.7 L513.1 514.5 L512.5 513.1 L511.7 512.3 L510.3 512.3 L510.0 510.9 L509.0 510.4 L507.0 511.0 L506.4 509.8 L506.9 507.8 L504.6 508.3 L505.4 506.1 L504.0 505.8 L502.1 505.8 L502.1 504.4 L502.2 503.0 L501.5 502.1 L500.9 501.1 L501.0 499.8 L498.5 499.7 L500.4 497.7 L499.1 496.9 L498.0 496.1 L498.6 494.7 L496.8 493.9 L498.5 492.5 L496.4 491.6 L496.6 490.4 L497.1 489.2 L496.5 488.0 L497.7 486.9 L496.7 485.6 L496.9 484.5 L497.8 483.4 L498.1 482.3 L497.8 481.1 L498.8 480.2 L500.0 479.3 L498.7 477.7 L500.3 477.1 L500.2 475.8 L500.0 474.4 L501.9 474.2 L502.8 473.4 L503.2 472.3 L502.8 470.7 L504.0 470.2 L504.9 469.5 L505.2 468.3 L505.1 466.5 L507.2 467.0 L507.8 466.0 L507.8 464.3 L509.2 464.1 L510.7 464.2 L511.3 463.1 L512.3 462.5 L513.7 462.7 L514.4 461.7 L515.5 461.4 L516.1 459.7 L517.6 460.5 L518.4 459.3 L519.3 458.2 L520.5 458.1 L521.9 459.3 L523.0 458.5 L524.2 459.1 L525.3 458.8 L526.4 458.5 L527.6 457.7 L528.8 457.4 L529.8 459.2 L530.8 460.1 L532.1 459.1 L533.0 460.3 L534.0 460.6 L535.7 459.0 L536.2 461.1 L537.8 459.9 L538.5 461.2 L540.2 460.3 L541.2 461.1 L541.2 463.5 L542.3 463.7 L544.4 462.7 L544.8 464.1 L545.4 465.2 L546.9 465.2 L547.8 465.9 L548.0 467.4 L548.8 468.2 L548.8 469.7 L550.0 470.2 L550.2 471.4 L551.9 471.6 L552.5 472.6 L552.0 474.2 L553.7 474.6 L552.9 476.2 L553.3 477.2 L555.1 477.8 L555.0 479.0 L556.4 479.8 L556.0 481.1 L556.5 482.2 L555.2 483.6 L557.2 484.5 L555.3 485.8 L556.8 486.8ZM519.5 515.3L519.3 516.1L520.5 514.5L522.5 516.3M550.4 477.7L551.7 477.4L550.7 478.4L548.8 479.7M541.0 512.9L539.1 514.5L538.2 516.5L537.9 518.4M548.7 496.3L546.8 497.7L547.5 497.8L545.4 496.4M554.7 496.0L555.9 498.0L556.8 497.3L554.9 498.3M546.2 501.9L546.4 501.8L546.3 499.9L544.5 500.0M532.3 511.3L531.3 509.8L531.6 509.3L530.4 508.1M548.4 503.4L550.2 503.0L548.7 502.2L547.6 502.5M545.9 503.0L545.1 502.5L544.9 502.0L547.1 502.2M550.7 475.2L551.6 475.8L552.9 475.2L553.7 477.3M540.9 509.1L538.9 507.1L540.1 505.4L541.0 503.7M532.5 512.6L530.4 512.8L531.7 511.6L532.0 513.4M553.6 494.0L555.2 492.5L555.9 490.9L554.2 493.0M534.0 510.2L535.9 511.3L536.6 512.3L537.3 511.4M555.1 487.4L556.3 488.6L555.0 489.0L554.0 490.3M549.2 504.0L551.4 505.0L552.2 506.2L550.4 506.6M536.6 509.7L538.6 507.6L540.5 509.5L540.2 511.0M546.3 501.1L544.7 498.9L542.8 496.8L544.2 494.9M550.8 486.7L550.4 485.3L552.5 484.8L552.9 485.1M553.5 491.4L553.4 490.4L551.8 492.1L550.5 491.8M546.9 508.6L548.2 508.6L546.6 509.0L546.5 510.6M550.3 476.2L551.2 477.6L551.1 479.1L552.8 477.6M521.4 515.5L520.7 514.4L519.0 513.8L520.6 513.2M549.1 481.5L548.2 479.6L548.8 480.8L550.7 479.0M555.0 492.7L556.5 492.8L558.5 492.9L559.7 492.8M546.0 504.5L548.2 506.0L548.6 507.6L549.2 508.9M543.2 505.2L543.7 506.2L542.2 506.2L540.5 507.0M549.6 503.9L547.8 506.0L548.5 504.3L547.8 502.8M550.5 493.2L549.1 493.8L550.7 494.8L550.5 493.1M536.5 463.1L536.3 464.5L536.6 465.5L538.7 466.0M540.2 506.9L541.9 504.8L544.1 504.6L542.1 503.6M554.0 491.6L553.5 492.2L551.8 493.7L551.2 495.1M538.3 511.2L537.8 509.1L538.0 510.6L536.2 510.3M532.3 510.5L534.5 512.5L535.3 512.4L533.4 510.8M555.8 490.2L557.3 490.0L556.3 490.2L555.6 490.3M546.0 467.1L545.8 469.3L546.8 467.3L547.9 468.0M552.9 499.1L552.9 499.3L551.4 497.3L549.3 496.0M549.8 497.8L548.2 495.9L549.2 496.8L550.9 495.5M549.4 495.3L551.0 494.6L549.7 493.2L551.5 492.0M548.6 474.8L548.8 474.2L549.5 472.4L549.2 472.8M550.5 480.6L551.1 482.7L551.0 483.4L552.5 482.3M550.8 482.0L552.9 481.1L552.6 480.5L554.7 480.7M544.1 505.8L544.7 505.0L545.5 505.0L543.6 503.3M552.2 492.6L552.3 491.1L551.3 488.9L550.3 488.1M553.6 479.2L554.6 480.3L553.6 480.3L554.6 482.0M538.1 509.8L536.0 507.8L536.0 509.4L534.5 510.7M551.9 474.5L550.2 475.8L548.6 474.1L548.1 474.1M544.8 472.7L543.8 471.3L542.2 469.5L540.1 468.3M554.0 490.3L554.5 490.2L553.7 490.7L552.4 489.3M536.8 509.5L537.6 507.9L536.4 507.3L536.6 507.9M549.3 478.7L551.1 479.8L550.7 479.3L551.0 477.6M553.7 485.2L555.4 484.6L555.4 483.5L557.2 483.0M551.0 480.3L552.8 480.0L553.2 479.1L553.6 479.0M532.0 511.1L533.7 509.6L534.0 510.4L533.9 509.6M510.5 471.9L512.2 472.3L512.1 472.9L512.7 474.4M534.8 515.7L534.9 515.0L534.3 516.8L534.2 514.9M551.8 491.3L552.5 491.8L552.7 493.3L553.1 495.3M553.9 495.1L552.8 496.3L552.2 498.3L552.8 497.9M538.1 510.5L536.0 511.8L533.8 509.8L531.8 510.4M522.4 513.9L522.3 515.8L522.2 514.5L524.4 512.8M543.6 511.5L543.2 510.9L542.6 510.3L543.8 510.9M547.2 502.2L545.8 503.6L546.1 503.6L544.8 505.7M536.7 462.8L537.3 460.7L539.2 462.3L537.3 460.5M553.7 492.1L554.4 490.7L556.6 488.9L556.9 488.9M552.5 485.7L553.7 486.9L551.5 486.2L551.7 485.3M530.8 514.3L528.7 512.5L528.8 511.3L527.5 510.9M550.8 476.3L550.8 476.0L552.4 477.6L554.2 479.6M553.6 483.7L552.3 484.6L551.3 483.7L550.9 481.6M551.4 487.8L551.1 488.9L551.7 488.1L552.7 487.7M547.2 502.9L546.8 502.0L545.3 504.1L545.7 504.8M553.0 481.8L550.8 479.9L551.0 479.8L548.8 478.5M551.7 485.2L553.7 486.7L551.7 486.2L551.0 484.6M555.2 484.8L554.2 486.0L552.6 486.6L550.8 487.2M503.7 500.7L505.9 501.0L507.7 499.9L508.2 498.6M510.1 503.8L509.4 503.0L508.1 504.6L509.3 504.1M532.8 513.7L534.3 511.7L534.9 513.3L535.4 513.4M527.3 513.7L526.1 513.2L525.3 514.2M540.7 509.6L541.7 509.4L540.3 510.5M552.6 494.5L552.2 494.6L551.3 496.1M504.1 475.2L504.6 474.8L504.8 475.2M527.6 516.2L526.1 517.7L525.8 517.7M548.0 504.7L547.4 505.2L548.1 503.7M552.4 500.5L551.3 501.1L552.1 502.1M554.3 488.9L555.5 487.3L553.8 488.7M517.5 462.1L518.5 462.5L517.4 461.3M554.3 490.6L554.9 492.3L554.0 491.1M506.5 507.6L505.5 509.0L506.0 510.0M547.9 506.5L547.5 507.4L545.9 506.7M503.2 477.5L503.3 476.1L502.4 476.6M513.5 513.1L513.0 512.4L512.6 512.9M515.6 514.2L514.5 514.5L515.9 513.6M529.9 514.7L531.1 516.0L532.4 516.8M552.0 501.3L550.8 499.6L550.8 497.8M551.8 494.9L553.5 494.1L554.8 495.7M531.4 513.1L530.4 513.6L531.1 512.9M531.7 463.1L530.0 462.6L530.6 463.9M553.7 478.8L555.4 479.2L555.2 477.6M501.3 476.1L502.3 476.0L502.8 477.0M554.6 487.0L554.9 488.7L556.6 486.9M552.5 482.2L550.7 481.5L549.3 479.7M535.7 463.1L534.3 463.9L533.3 463.3M505.1 502.5L506.0 501.4L507.1 501.2M535.9 491.5L536.6 492.0L538.8 492.2L539.5 492.5L539.3 492.0L540.8 493.9M523.5 498.3L523.9 499.1L525.7 498.8L526.0 500.4L526.3 500.6L527.3 500.9M528.5 506.3L528.4 505.9L530.8 507.8L531.0 507.6L532.0 508.7L534.2 509.3M534.4 504.2L534.3 506.2L534.2 506.4L534.3 508.4L536.6 509.0L537.9 510.6" fill="none" stroke="#5e9a2e" stroke-width=".7" stroke-linejoin="round"/><path d="M665.7 552.0 L665.3 553.1 L666.1 554.3 L664.9 555.3 L665.5 556.5 L665.0 557.6 L664.1 558.5 L664.4 559.8 L663.2 560.5 L663.3 561.8 L662.2 562.4 L661.6 563.3 L661.4 564.6 L661.2 565.9 L659.5 565.9 L658.8 566.7 L658.4 568.0 L657.7 569.2 L656.4 569.2 L655.2 569.5 L654.7 571.0 L653.0 569.9 L652.4 571.6 L651.0 571.0 L649.8 571.0 L648.7 571.1 L647.7 571.6 L646.6 572.6 L645.4 571.4 L644.3 572.1 L643.1 572.0 L642.1 571.4 L640.9 571.4 L640.1 570.3 L639.0 569.9 L637.9 569.7 L636.5 570.0 L635.7 569.0 L634.9 568.2 L633.7 568.0 L633.0 567.1 L632.3 566.1 L630.9 565.9 L630.2 564.9 L630.2 563.5 L629.1 562.9 L628.5 561.9 L627.4 561.1 L627.2 559.9 L627.5 558.6 L626.0 557.9 L627.2 556.4 L626.4 555.4 L625.7 554.3 L626.7 553.1 L626.0 552.0 L626.9 550.9 L625.8 549.7 L625.8 548.5 L626.4 547.4 L626.2 546.2 L627.5 545.4 L627.3 544.1 L627.9 543.1 L628.5 542.1 L629.2 541.2 L629.3 539.9 L629.9 538.8 L631.3 538.5 L631.9 537.4 L633.4 537.5 L633.6 535.9 L634.6 535.3 L635.2 534.1 L636.4 533.8 L637.9 534.2 L638.8 533.6 L639.7 532.7 L641.1 533.5 L642.0 532.5 L643.2 532.8 L644.3 532.8 L645.5 532.8 L646.6 531.5 L647.7 532.7 L648.8 532.7 L649.9 532.6 L651.3 532.0 L651.9 533.7 L653.2 533.4 L654.3 533.7 L655.7 533.7 L656.6 534.4 L657.7 534.9 L658.0 536.5 L659.0 537.0 L659.8 537.8 L661.2 538.0 L662.1 538.8 L661.7 540.6 L662.3 541.5 L663.0 542.4 L663.5 543.4 L664.4 544.2 L665.0 545.2 L664.8 546.5 L664.6 547.7 L665.6 548.6 L665.6 549.7 L666.1 550.9ZM646.4 569.7L646.9 570.4L644.9 572.2L646.2 573.8M664.7 554.2L664.2 553.7L662.4 554.3L660.5 552.4M660.3 561.1L658.4 558.9L656.8 557.1L656.2 555.0M658.1 566.7L658.6 565.2L657.6 564.5L657.0 562.9M641.6 568.9L641.5 567.1L639.7 566.4L638.7 567.8M647.6 535.8L645.5 537.8L645.6 536.3L645.8 534.2M645.5 533.0L646.4 531.9L645.8 530.4L647.0 530.6M664.6 553.6L663.9 552.4L665.3 554.5L666.8 555.8M655.4 565.5L655.5 564.9L653.4 562.8L652.5 561.8M660.4 540.6L662.4 540.4L664.3 542.5L666.3 541.9M660.0 560.6L658.7 561.1L660.4 562.6L660.3 563.3M656.5 567.6L654.7 568.3L656.5 569.5L657.6 569.5M654.8 566.5L656.1 568.5L655.7 568.1L657.6 569.1M644.8 568.2L643.2 566.7L645.0 568.1L643.4 569.5M646.5 569.0L646.8 567.4L644.6 569.4L645.3 569.6M664.4 558.0L664.1 559.6L665.5 558.3L664.4 557.4M660.5 560.1L660.2 558.5L662.0 557.8L661.8 558.2M648.4 571.1L648.1 572.9L648.1 573.0L648.2 570.9M661.6 552.1L662.9 550.7L662.8 551.6L663.1 550.9M660.3 562.3L660.6 563.6L658.8 563.9L657.7 562.9M661.0 561.7L662.1 563.5L661.9 564.0L661.9 564.1M662.7 544.3L662.5 544.4L662.4 546.4L663.2 548.0M655.7 566.9L657.7 568.4L656.1 566.8L655.8 564.9M662.1 556.0L660.2 556.7L661.4 558.5L659.9 559.4M664.6 556.3L666.7 555.1L668.7 554.6L668.6 556.8M664.8 553.8L663.3 553.5L663.4 552.8L662.1 552.0M662.2 559.3L662.0 557.2L661.2 557.8L661.3 555.8M664.6 557.8L665.9 559.9L664.2 558.9L662.2 560.1M661.9 558.7L663.7 560.1L662.7 558.6L664.5 558.9M658.3 565.7L656.5 563.8L657.3 563.4L655.4 565.4M660.4 545.1L661.9 543.2L663.5 543.0L662.8 543.3M662.4 541.8L661.3 540.1L661.5 539.0L659.7 537.5M656.1 565.5L655.2 566.6L654.3 566.6L652.9 566.0M658.9 560.9L657.8 558.8L658.8 559.0L657.4 558.9M659.5 565.2L659.2 565.2L660.6 564.7L660.7 565.6M664.6 557.9L663.9 559.4L664.8 560.0L664.4 559.3M656.8 563.6L657.9 562.6L656.4 560.7L657.9 562.4M661.3 562.1L660.3 560.9L659.4 560.7L657.9 560.5M664.7 557.6L664.9 556.5L666.9 555.6L666.3 553.4M633.8 564.1L633.7 564.1L632.4 564.1L630.2 563.1M653.3 566.0L651.2 565.1L650.0 565.5L650.1 566.6M658.0 565.8L658.9 567.4L658.4 566.7L660.6 565.1M661.2 556.3L662.7 558.0L663.2 559.1L664.6 557.5M660.5 541.8L660.5 543.3L661.8 544.7L662.2 546.5M662.5 551.6L660.5 550.0L659.8 548.3L661.3 548.5M660.9 541.7L661.5 542.5L661.4 540.4L662.7 541.4M662.2 543.6L660.3 544.6L659.2 542.8L658.2 543.8M660.9 558.9L662.0 561.0L661.9 560.5L661.8 561.3M661.4 561.7L659.5 560.1L658.4 561.2L657.6 561.5M659.1 543.4L657.1 542.4L657.9 543.2L658.7 542.3M662.2 545.5L660.5 547.2L659.2 549.3L661.1 547.2M662.3 558.2L663.7 560.3L663.5 559.2L662.2 561.2M650.5 569.8L649.2 569.9L650.8 568.6M653.8 535.5L655.2 536.3L654.2 537.7M629.0 553.5L627.2 553.5L627.0 552.7M657.3 565.8L656.6 567.0L654.8 567.9M655.2 537.4L656.7 538.1L658.2 537.4M633.5 564.9L635.3 565.2L634.8 565.0M643.3 568.9L641.9 570.1L641.1 571.7M646.1 569.6L646.1 568.5L645.7 570.2M660.2 539.4L660.6 540.9L662.2 541.1M642.7 535.2L643.6 535.0L644.5 535.5M642.1 568.7L643.7 567.3L643.6 566.8M640.4 569.9L642.2 569.1L642.7 568.4M629.2 545.7L628.0 544.5L627.0 545.9M628.5 552.3L629.9 554.1L629.8 552.8M652.1 568.1L651.5 566.6L650.6 565.8M628.7 543.9L629.6 543.6L629.3 543.7M633.3 564.4L631.7 563.6L633.4 562.3M627.5 551.6L628.8 550.6L628.0 549.7M652.0 554.4L652.7 555.2L654.9 557.2L657.0 556.7L656.6 558.3L658.6 559.1M643.6 559.0L644.8 558.5L645.4 560.7L647.3 562.7L649.7 562.9L649.5 562.8M647.0 564.4L648.0 565.9L650.2 567.5L651.6 569.2L652.4 570.3L652.1 572.1M651.0 563.0L651.2 565.2L652.5 565.5L652.4 565.8L653.8 567.3L653.6 567.0" fill="none" stroke="#5e9a2e" stroke-width=".7" stroke-linejoin="round"/><path d="M606.4 446.7 L606.2 449.1 L605.9 449.6 L605.2 451.4 L606.8 453.7 L605.4 455.5 L603.8 455.8 L601.9 457.3 L600.8 457.4 L598.6 458.2 L597.6 457.8 L595.0 458.0 L594.5 457.7 L592.6 457.4 L591.6 456.9 L589.9 456.1 L588.4 456.4 L586.3 454.5 L586.1 454.1 L585.0 452.6 L584.7 451.2 L583.9 448.5 L584.3 448.2 L584.3 445.9 L583.5 445.0 L584.1 442.6 L584.5 442.0 L585.7 439.8 L585.8 439.0 L587.6 437.2 L587.6 435.8 L590.0 434.5 L591.5 436.1 L593.2 435.6 L594.3 433.3 L597.0 433.4 L597.6 435.5 L600.1 436.4 L600.9 435.7 L603.2 437.2 L604.3 437.0 L605.8 438.8 L605.3 440.5 L606.5 443.0 L606.0 443.6 L606.4 446.1ZM603.3 458.0 L602.9 461.0 L603.1 461.5 L602.2 463.9 L600.3 463.8 L599.1 465.3 L598.8 466.8 L596.8 468.2 L595.5 467.6 L593.0 468.3 L592.8 469.5 L590.1 469.6 L589.6 468.8 L587.6 468.3 L586.8 467.4 L585.1 466.4 L583.9 466.3 L582.4 464.7 L581.6 464.1 L580.4 461.6 L579.0 461.5 L578.6 459.4 L579.8 458.0 L579.9 456.0 L579.6 454.6 L580.8 451.8 L582.0 452.1 L583.6 450.1 L583.8 449.5 L585.3 448.5 L586.0 446.8 L588.2 446.0 L589.6 447.3 L591.8 447.2 L592.7 447.1 L594.8 447.6 L595.9 447.5 L597.9 448.6 L598.9 449.0 L600.4 450.6 L600.1 452.2 L600.9 453.8 L601.3 455.0 L601.7 457.1ZM589.2 459.3 L588.9 461.8 L589.9 462.8 L589.2 464.7 L586.4 464.8 L585.4 466.2 L585.2 467.7 L583.3 469.2 L583.1 470.4 L580.9 471.2 L580.0 472.1 L578.0 472.3 L576.4 472.0 L574.3 471.7 L573.0 471.4 L571.2 470.6 L569.8 470.0 L567.6 468.0 L567.1 467.6 L565.6 465.3 L567.2 463.7 L566.4 461.1 L565.7 460.9 L565.6 459.0 L565.3 457.6 L565.8 455.3 L566.5 454.6 L567.4 452.9 L568.9 452.4 L570.4 450.8 L570.5 449.7 L572.2 448.7 L573.4 448.2 L575.9 447.6 L576.5 446.9 L578.9 446.9 L579.7 447.9 L581.7 448.5 L582.4 449.4 L584.0 450.4 L585.3 450.7 L586.6 452.1 L588.0 452.8 L589.1 455.3 L589.0 456.0 L589.4 457.8ZM579.8 448.7 L579.4 451.4 L580.9 452.2 L579.9 454.5 L579.3 455.3 L577.9 456.9 L576.2 456.9 L574.2 458.1 L573.9 459.7 L571.3 460.3 L570.4 458.6 L568.1 458.5 L567.0 460.6 L564.2 459.6 L563.6 459.3 L561.0 457.3 L562.0 455.8 L560.8 454.2 L559.5 453.6 L558.6 450.8 L559.0 450.3 L558.9 447.5 L557.8 446.9 L558.5 444.4 L559.3 443.8 L561.0 441.2 L561.0 440.7 L562.7 439.1 L563.7 438.3 L565.7 437.4 L567.2 438.2 L570.1 437.9 L570.6 436.8 L572.9 437.2 L573.5 438.8 L575.7 440.0 L577.1 439.4 L579.1 441.4 L579.7 441.9 L581.1 444.5 L581.1 445.2 L581.6 447.9ZM586.8 436.8 L586.5 439.2 L587.1 440.3 L586.2 442.5 L584.0 442.5 L582.4 444.3 L582.3 445.1 L580.4 446.3 L579.4 446.3 L576.9 446.9 L576.5 447.4 L574.4 447.3 L573.0 448.4 L570.6 447.5 L570.4 446.0 L568.2 444.3 L567.7 444.2 L566.4 442.5 L564.6 442.1 L563.7 439.3 L564.1 438.6 L564.0 436.3 L563.9 435.0 L564.6 432.4 L564.9 431.6 L566.2 429.6 L567.0 428.8 L569.3 426.9 L570.3 427.4 L572.6 426.4 L573.1 425.3 L576.2 425.0 L576.6 424.7 L579.5 425.3 L579.4 427.3 L581.5 428.4 L582.9 427.8 L584.4 429.1 L584.8 430.6 L586.1 433.1 L587.3 433.2 L587.8 436.3ZM600.0 435.8 L599.7 438.6 L598.2 438.9 L597.5 440.6 L598.1 442.6 L596.2 444.9 L595.4 444.8 L593.5 446.1 L592.7 447.0 L589.9 447.9 L589.3 447.7 L586.7 447.8 L586.0 446.7 L584.0 446.2 L583.0 445.9 L581.2 444.9 L580.0 444.5 L578.7 443.1 L577.5 442.3 L576.4 440.3 L577.4 438.8 L577.0 436.9 L576.4 435.8 L576.6 433.6 L575.9 432.4 L576.6 430.5 L578.5 430.0 L579.8 428.4 L580.6 427.8 L582.7 426.4 L583.2 426.3 L584.8 425.7 L585.9 424.3 L588.6 424.2 L589.3 423.6 L591.9 424.3 L592.2 425.8 L594.5 427.2 L595.5 426.7 L597.2 428.5 L597.4 429.5 L598.6 432.2 L599.8 432.2 L600.3 435.4Z" fill="none" stroke="#5e9a2e" stroke-width=".7" stroke-linejoin="round"/><path d="M583.0 448.0Q588.7 448.5 594.1 445.5M594.1 445.5L600.5 443.0M594.1 445.5L599.1 440.8M583.0 448.0Q584.1 452.9 588.0 456.8M588.0 456.8L587.3 463.6M588.0 456.8L590.5 463.2M583.0 448.0Q579.7 452.9 579.6 459.3M579.6 459.3L573.8 463.1M579.6 459.3L576.8 465.6M583.0 448.0Q575.9 447.4 569.0 451.0M569.0 451.0L562.2 450.3M569.0 451.0L563.2 447.3M583.0 448.0Q578.7 444.1 572.5 443.0M572.5 443.0L568.8 437.3M572.5 443.0L566.5 439.8M583.0 448.0Q582.7 441.4 578.6 435.6M578.6 435.6L576.1 429.2M578.6 435.6L573.1 431.5M583.0 448.0Q588.7 445.6 592.4 440.2M592.4 440.2L599.3 440.6M592.4 440.2L597.9 436.1" fill="none" stroke="#5e9a2e" stroke-width=".85" stroke-linecap="round"/><circle cx="583" cy="448" r="1.600" fill="#5e9a2e"/><path d="M651.4 415.3 L650.9 417.7 L650.1 420.1 L648.8 422.2 L646.5 423.3 L644.6 424.8 L642.3 425.6 L639.7 425.6 L637.4 424.7 L635.5 423.3 L633.6 421.9 L631.7 420.2 L631.7 417.6 L631.2 415.3 L630.9 412.8 L632.2 410.7 L633.7 408.9 L635.4 407.2 L637.3 405.6 L639.8 405.5 L642.2 405.4 L644.6 405.8 L646.9 406.8 L648.5 408.7 L649.5 410.8 L650.8 412.9ZM642.5 415.0L648.7 411.7L646.4 414.3L649.5 415.8ZM642.3 416.1L649.2 417.7L645.7 418.1L647.0 421.3ZM641.4 416.7L645.4 422.6L642.6 420.6L641.4 423.8ZM640.2 416.5L638.1 423.3L637.9 419.8L634.6 420.9ZM639.6 415.9L634.4 420.7L636.0 417.6L632.6 416.9ZM639.6 414.7L632.6 413.8L636.0 413.0L634.4 410.0ZM640.1 414.1L634.3 410.1L637.6 410.9L637.6 407.5ZM641.0 413.8L639.1 407.0L641.1 409.8L643.3 407.1ZM641.9 414.1L644.6 407.6L644.5 411.0L647.8 410.2ZM639.0 408.3l-1.4 -1.3l-2.4 0.7M639.8 418.8l0.7 0.5l-0.3 -1.7M637.3 410.9l-0.3 -1.7l2.1 1.8M638.0 407.9l0.4 -0.8l-1.9 0.5M635.9 414.7l2.5 1.7l-1.9 1.9M647.3 415.4l-0.9 1.1l2.3 0.2M641.3 412.0l0.8 -1.9l-0.2 -0.8M647.0 418.3l-2.0 -1.2l-2.1 0.8" fill="none" stroke="#5e9a2e" stroke-width=".75" stroke-linejoin="round"/><path d="M462.2 451.0 L462.4 453.4 L461.5 455.7 L460.0 457.6 L458.0 459.0 L456.1 460.6 L453.7 461.2 L451.3 460.9 L449.0 460.4 L447.0 459.0 L445.4 457.3 L443.8 455.6 L442.7 453.4 L442.9 451.0 L442.5 448.5 L443.9 446.5 L445.2 444.5 L447.1 443.1 L448.8 441.2 L451.3 440.8 L453.8 440.7 L456.1 441.5 L457.9 443.2 L459.9 444.5 L461.4 446.4 L461.8 448.7ZM454.0 451.3L461.0 450.4L457.9 452.0L460.2 454.5ZM453.7 451.9L460.3 454.3L456.9 454.3L457.8 457.6ZM453.0 452.4L457.0 458.2L454.2 456.2L453.0 459.5ZM451.6 452.2L449.2 458.8L449.2 455.4L445.8 456.3ZM451.2 451.7L446.3 456.8L447.7 453.6L444.3 453.1ZM451.2 450.3L444.3 448.7L447.7 448.3L446.4 445.1ZM451.7 449.7L446.4 445.0L449.7 446.3L450.1 442.9ZM452.8 449.5L452.0 442.5L453.6 445.6L456.2 443.3ZM453.6 450.0L457.0 443.8L456.5 447.2L459.9 446.8ZM448.6 451.4l-2.3 1.8l-1.3 1.4M454.5 458.6l2.0 1.3l1.3 0.4M452.0 447.4l-0.1 1.6l-1.5 2.1M456.3 447.7l-0.7 -0.2l-0.6 2.5M450.1 453.1l-2.0 1.1l2.5 -0.0M446.8 451.3l1.2 -1.4l0.5 0.3M449.7 448.3l-1.6 -0.8l2.1 -0.8M448.8 448.4l-2.0 -2.2l1.6 1.4" fill="none" stroke="#5e9a2e" stroke-width=".75" stroke-linejoin="round"/><path d="M492.0 447.0 L490.9 449.3 L489.9 451.4 L489.4 454.0 L487.0 455.0 L484.9 456.0 L482.7 457.1 L480.3 456.8 L477.8 456.7 L476.0 455.0 L473.7 453.9 L472.8 451.6 L471.7 449.4 L471.1 447.0 L471.6 444.6 L472.3 442.2 L473.9 440.2 L476.1 439.1 L477.8 437.3 L480.3 437.0 L482.7 437.3 L484.9 437.9 L487.4 438.5 L489.0 440.3 L490.7 442.1 L491.5 444.5ZM483.0 447.3L490.0 446.4L486.9 448.0L489.2 450.6ZM482.6 448.0L489.1 450.9L485.6 450.6L486.3 454.0ZM481.6 448.5L484.4 455.0L482.0 452.5L480.2 455.4ZM480.7 448.3L478.8 455.1L478.5 451.6L475.3 452.8ZM480.1 447.6L475.0 452.4L476.5 449.4L473.2 448.7ZM480.2 446.2L473.3 444.6L476.8 444.2L475.5 441.0ZM480.7 445.8L475.1 441.4L478.4 442.5L478.6 439.0ZM481.9 445.6L481.8 438.5L483.1 441.7L485.8 439.7ZM482.8 446.3L487.6 441.1L486.3 444.3L489.7 444.8ZM479.3 444.0l1.6 0.8l-1.6 -2.3M478.4 446.4l2.1 0.0l0.1 -0.5M477.5 440.6l-1.0 -0.6l0.4 -1.0M476.8 443.8l-0.3 0.9l0.1 -2.1M486.3 446.9l-0.3 -0.5l2.1 2.3M476.5 446.6l-2.0 2.0l-1.6 0.2M478.8 450.8l-0.7 -1.5l-2.3 0.2M483.3 441.0l-1.5 1.0l-2.2 -0.4" fill="none" stroke="#5e9a2e" stroke-width=".75" stroke-linejoin="round"/><path d="M519.9 437.0 L519.6 439.5 L518.7 441.8 L516.7 443.4 L515.2 445.3 L513.0 446.3 L510.7 447.0 L508.3 446.6 L506.1 446.1 L503.9 445.2 L502.2 443.4 L500.7 441.6 L500.3 439.3 L499.9 437.0 L499.6 434.6 L500.7 432.4 L502.0 430.4 L503.7 428.6 L506.0 427.8 L508.3 427.5 L510.7 426.8 L513.1 427.6 L515.3 428.6 L517.1 430.3 L518.8 432.1 L519.1 434.6ZM511.0 437.2L517.9 435.8L515.0 437.6L517.5 439.9ZM510.7 437.9L517.3 440.3L513.9 440.3L514.8 443.6ZM509.7 438.5L512.8 444.8L510.3 442.4L508.6 445.5ZM508.7 438.2L506.7 445.0L506.5 441.6L503.2 442.7ZM508.1 437.6L502.9 442.3L504.5 439.3L501.1 438.5ZM508.0 436.7L501.0 437.6L504.1 436.0L501.8 433.4ZM508.7 435.7L503.5 431.0L506.7 432.3L507.1 428.8ZM509.9 435.6L509.6 428.5L510.9 431.7L513.7 429.6ZM510.7 436.1L514.7 430.3L513.8 433.6L517.3 433.6ZM503.6 439.0l-1.6 -1.6l-0.9 1.6M510.7 440.4l-2.0 -2.3l-1.1 0.4M511.5 432.8l-0.7 -1.1l-1.0 1.4M505.4 435.7l-2.0 1.4l1.0 1.6M509.9 442.7l2.1 0.5l2.2 -1.7M512.7 436.5l-0.4 -2.4l1.5 0.9M516.4 435.8l2.2 0.2l2.4 1.2M505.0 443.5l-0.6 -1.5l-2.1 -0.2" fill="none" stroke="#5e9a2e" stroke-width=".75" stroke-linejoin="round"/><path d="M642.9 442.4 L642.7 444.9 L641.3 446.9 L640.6 449.4 L638.2 450.4 L636.3 451.9 L633.9 451.9 L631.5 452.6 L629.3 451.4 L626.9 450.8 L625.0 449.2 L623.6 447.2 L623.0 444.8 L622.3 442.4 L622.5 439.9 L624.2 437.9 L625.2 435.8 L626.8 433.8 L629.1 432.8 L631.5 432.5 L633.9 432.7 L636.4 432.6 L638.1 434.5 L640.4 435.6 L641.9 437.6 L642.1 440.1ZM634.2 442.3L640.8 439.7L638.2 442.0L641.1 443.9ZM633.9 443.3L640.6 445.5L637.2 445.6L638.2 448.9ZM632.9 443.9L636.1 450.2L633.6 447.8L631.9 450.9ZM632.0 443.7L630.8 450.7L630.2 447.3L627.1 448.8ZM631.2 442.7L625.0 446.0L627.3 443.4L624.2 441.9ZM631.4 441.7L624.5 440.1L627.9 439.7L626.6 436.5ZM631.9 441.2L626.3 436.8L629.6 437.9L629.8 434.4ZM633.2 441.0L633.4 433.9L634.5 437.2L637.4 435.3ZM633.7 441.3L636.4 434.7L636.2 438.2L639.6 437.5ZM637.9 446.0l1.5 1.6l2.5 1.8M632.0 449.1l2.1 -2.0l-0.0 -1.7M636.1 446.6l0.9 2.4l-1.8 0.0M639.5 442.3l0.2 -1.3l0.7 -1.2M628.8 437.5l-0.5 1.5l-0.5 -0.2M634.8 438.7l-1.6 0.4l-0.3 1.9M632.7 447.3l-2.2 -0.2l-0.9 -0.3M633.0 439.2l2.4 1.1l1.6 0.2" fill="none" stroke="#5e9a2e" stroke-width=".75" stroke-linejoin="round"/><path d="M636.9 473.0 L637.1 475.5 L636.2 477.8 L634.3 479.4 L632.9 481.5 L630.6 482.5 L628.2 482.5 L625.7 483.4 L623.5 482.1 L621.4 481.1 L619.6 479.6 L618.1 477.7 L617.7 475.3 L616.8 473.0 L617.0 470.5 L618.1 468.3 L619.3 466.2 L621.2 464.7 L623.3 463.3 L625.8 463.4 L628.2 463.2 L630.5 463.7 L632.5 465.1 L634.8 466.1 L636.0 468.3 L636.3 470.7ZM628.5 473.0L635.3 471.2L632.5 473.2L635.2 475.4ZM628.2 473.9L634.8 476.4L631.3 476.4L632.2 479.7ZM627.4 474.4L631.4 480.3L628.6 478.3L627.4 481.5ZM626.4 474.4L625.8 481.4L624.9 478.1L621.9 479.8ZM625.6 473.5L620.1 477.9L621.9 475.0L618.6 474.0ZM625.5 472.7L618.5 473.6L621.6 472.0L619.3 469.5ZM626.3 471.7L621.2 466.8L624.4 468.2L624.9 464.8ZM627.3 471.5L626.4 464.5L628.0 467.6L630.5 465.3ZM628.0 471.9L630.9 465.4L630.6 468.9L634.0 468.2ZM629.3 470.7l-1.6 1.6l-1.4 -0.4M622.2 471.1l-0.0 0.0l-0.1 -2.2M628.8 469.0l-2.3 -0.5l1.6 0.6M621.8 474.4l-1.4 0.6l-0.7 -2.2M629.4 475.5l0.9 1.9l1.3 -1.4M631.7 479.2l-0.6 -1.7l0.4 0.6M621.9 471.7l-1.0 -0.0l-0.2 0.9M622.5 474.5l2.4 -1.9l1.3 -0.4" fill="none" stroke="#5e9a2e" stroke-width=".75" stroke-linejoin="round"/><path d="M642.7 506.0 L641.9 508.3 L641.1 510.5 L640.1 512.7 L637.9 513.9 L636.1 515.6 L633.7 516.2 L631.3 515.5 L628.9 515.5 L626.8 514.2 L624.9 512.7 L623.2 510.9 L622.3 508.5 L622.6 506.0 L622.5 503.5 L623.4 501.2 L624.7 499.1 L627.1 498.2 L628.8 496.2 L631.3 496.3 L633.7 496.4 L636.1 496.6 L638.4 497.5 L640.3 499.1 L641.2 501.4 L642.5 503.5ZM634.0 505.7L640.2 502.4L637.9 505.0L641.0 506.5ZM633.4 507.2L639.3 511.0L636.0 510.3L636.1 513.7ZM632.9 507.5L636.6 513.4L633.9 511.3L632.6 514.5ZM631.7 507.3L630.1 514.1L629.7 510.7L626.5 512.0ZM631.2 506.7L626.3 511.8L627.7 508.6L624.3 508.1ZM631.0 505.8L624.0 506.7L627.1 505.1L624.7 502.6ZM631.5 504.9L625.5 501.2L628.9 501.9L628.6 498.4ZM632.8 504.5L632.2 497.5L633.7 500.6L636.3 498.4ZM633.7 505.1L637.6 499.2L636.8 502.6L640.2 502.5ZM635.4 499.4l-0.4 1.7l-1.5 1.9M632.5 513.7l-0.6 -0.4l0.1 -2.2M637.6 508.6l1.1 -2.3l-0.5 -0.7M634.0 498.2l-2.0 0.2l-2.0 1.4M638.6 503.7l0.4 -2.3l-2.0 -1.3M635.7 507.8l2.3 -0.8l2.0 1.3M633.7 498.5l1.0 -0.8l-0.2 -0.5M635.7 506.6l0.3 0.1l2.4 0.6" fill="none" stroke="#5e9a2e" stroke-width=".75" stroke-linejoin="round"/><path d="M538.1 543.5 L537.9 545.9 L537.3 548.4 L535.3 549.9 L533.4 551.4 L531.7 553.2 L529.2 553.3 L526.8 553.3 L524.3 553.1 L522.5 551.5 L520.2 550.4 L519.2 548.1 L518.7 545.8 L517.6 543.5 L518.2 541.1 L519.5 539.0 L520.3 536.6 L522.2 535.0 L524.4 533.9 L526.8 533.4 L529.3 533.1 L531.4 534.6 L534.0 534.9 L535.6 536.8 L536.6 539.0 L537.8 541.1ZM529.5 543.4L536.1 540.9L533.5 543.1L536.4 545.1ZM529.1 544.5L535.4 547.6L532.0 547.3L532.5 550.7ZM528.1 545.0L530.9 551.5L528.5 549.0L526.7 551.9ZM527.2 544.8L525.6 551.7L525.2 548.2L522.0 549.5ZM526.7 544.2L521.8 549.4L523.2 546.2L519.8 545.7ZM526.6 543.0L519.5 543.0L522.8 541.8L520.8 539.0ZM527.1 542.3L521.6 537.9L524.9 539.0L525.1 535.5ZM528.4 542.1L528.2 535.0L529.5 538.2L532.3 536.1ZM529.3 542.7L534.1 537.5L532.8 540.7L536.2 541.2ZM528.9 537.9l-1.6 1.0l-1.2 2.5M531.7 550.4l-2.4 1.4l-0.8 0.4M524.1 545.8l-0.3 1.6l-0.7 -0.7M528.8 539.7l-0.7 0.1l0.1 -1.7M528.5 538.1l-2.0 -0.8l-2.2 -0.8M531.2 546.3l0.3 0.9l-1.0 -0.2M522.1 543.0l2.0 -1.4l1.4 0.3M533.1 539.5l-2.5 -2.2l1.5 -1.0" fill="none" stroke="#5e9a2e" stroke-width=".75" stroke-linejoin="round"/><path d="M515.6 564.0 L515.4 566.3 L514.9 568.7 L513.2 570.4 L511.5 571.9 L509.5 573.3 L507.2 573.8 L504.8 573.6 L502.5 573.2 L500.1 572.5 L498.8 570.4 L497.4 568.5 L496.7 566.3 L496.3 564.0 L496.7 561.7 L496.7 559.1 L498.7 557.5 L500.0 555.4 L502.6 555.0 L504.7 553.7 L507.2 554.1 L509.6 554.5 L511.8 555.6 L513.3 557.5 L514.6 559.5 L515.9 561.6ZM507.5 563.8L513.8 560.7L511.4 563.2L514.5 564.9ZM507.3 564.7L514.2 566.1L510.8 566.7L512.2 569.8ZM506.1 565.5L508.6 572.1L506.4 569.5L504.4 572.4ZM505.2 565.3L503.3 572.1L503.0 568.6L499.7 569.8ZM504.6 564.6L499.5 569.4L501.0 566.4L497.7 565.6ZM504.6 563.5L497.5 563.1L500.8 562.1L499.0 559.2ZM505.5 562.6L501.1 557.0L504.1 558.9L505.1 555.6ZM506.1 562.5L504.6 555.6L506.5 558.5L508.8 556.0ZM507.0 562.9L509.9 556.4L509.6 559.9L513.0 559.2ZM502.7 565.9l-0.7 -2.3l1.3 1.5M502.6 567.5l-1.2 2.3l1.9 0.8M507.8 567.4l1.3 -1.6l0.9 -0.4M509.9 564.8l2.1 -0.9l0.9 1.3M501.6 567.3l1.8 1.1l0.1 0.2M501.1 565.6l0.9 -1.3l1.8 -1.0M506.9 571.8l-2.4 -0.5l0.3 -0.3M509.0 558.4l0.0 -2.5l2.4 -0.7" fill="none" stroke="#5e9a2e" stroke-width=".75" stroke-linejoin="round"/><path d="M502.0 590.0 L501.6 592.4 L501.2 594.8 L499.3 596.5 L497.7 598.2 L495.5 599.2 L493.2 599.8 L490.7 600.4 L488.6 599.0 L486.4 598.2 L484.7 596.4 L483.3 594.6 L481.8 592.5 L482.2 590.0 L482.2 587.6 L483.2 585.4 L484.3 583.2 L486.3 581.8 L488.6 581.0 L490.8 580.1 L493.2 580.2 L495.6 580.4 L497.7 581.7 L499.3 583.6 L501.0 585.3 L501.5 587.7ZM493.5 590.0L500.2 587.9L497.5 590.0L500.2 592.1ZM493.2 590.8L500.0 592.8L496.6 593.0L497.7 596.3ZM492.3 591.5L495.8 597.6L493.1 595.4L491.7 598.5ZM491.1 591.2L488.8 597.9L488.7 594.4L485.4 595.4ZM490.6 590.5L485.0 594.7L486.8 591.8L483.5 590.8ZM490.6 589.3L483.7 588.3L487.0 587.6L485.5 584.5ZM491.4 588.6L486.7 583.3L489.8 585.0L490.6 581.6ZM492.3 588.5L491.7 581.5L493.1 584.6L495.8 582.4ZM493.2 589.1L497.3 583.4L496.4 586.7L499.9 586.8ZM487.1 593.7l1.4 -2.0l2.2 -0.7M494.4 592.9l-0.8 -2.2l-0.5 -0.4M489.0 585.6l2.2 0.8l-0.9 1.9M489.5 582.6l1.2 2.3l-1.5 -1.1M495.1 589.5l2.1 2.1l-1.8 -1.7M498.7 586.1l1.8 1.1l1.3 -1.0M498.1 590.3l1.9 2.2l0.1 -2.5M494.4 594.7l-1.3 -2.4l-1.5 -0.0" fill="none" stroke="#5e9a2e" stroke-width=".75" stroke-linejoin="round"/><circle cx="439.400" cy="538.500" r="5.100" fill="none" stroke="#e62828" stroke-width="1" opacity=".85"/><path d="M419 538.500h40.700M439.400 518.500v40.500" stroke="#e62828" stroke-width="1.100" opacity=".85"/></g></svg><div style="left:1138px;top:155px;width:15.500px;height:577px;background:#fafafa;border-left:1px solid #ececec"></div><div style="left:1143.700px;top:303px;width:7.500px;height:279.700px;background:#000;border-radius:3.500px"></div><div style="left:95.500px;top:732px;width:1004.500px;height:16px;background:#fafafa;border-top:1px solid #e8e8e8"></div><div style="left:168.500px;top:737.300px;width:857px;height:7px;background:#7d7d7d;border-radius:3.500px"></div><div style="left:72px;top:732px;width:23.500px;height:16px;background:#ececec"></div><div style="left:1100px;top:732px;width:55px;height:16px;background:#ececec"></div><span style="left:1119.3px;top:731.5px;font-size:14px;line-height:18px;letter-spacing:-0.905px;white-space:nowrap;color:#111">1 &lt; 10</span>
<div style="left:1153.500px;top:108px;width:2px;height:690px;background:#d2d2d2"></div><div style="left:1155.500px;top:108px;width:299px;height:22.500px;background:linear-gradient(#eaeaea,#d6d6d6)"></div><span style="left:1280.5px;top:109.5px;font-size:12.4px;line-height:18px;letter-spacing:-0.204px;white-space:nowrap;color:#222">Elenco dei livelli</span><div style="left:1155.500px;top:156px;width:299px;height:642px;background:#fff"></div><div style="left:1155.500px;top:130.500px;width:299px;height:25.500px;background:#a6a6a6"></div><div style="left:1156px;top:131.500px;width:58.5px;height:23px;background:linear-gradient(#f4f4f4,#f8f8f8 40%,#e9e9e9)"></div><div style="left:1216px;top:131.500px;width:58.5px;height:23px;background:linear-gradient(#f4f4f4,#f8f8f8 40%,#e9e9e9)"></div><div style="left:1276px;top:131.500px;width:58.5px;height:23px;background:linear-gradient(#f4f4f4,#f8f8f8 40%,#e9e9e9)"></div><div style="left:1336px;top:131.500px;width:58.5px;height:23px;background:linear-gradient(#f4f4f4,#f8f8f8 40%,#e9e9e9)"></div><div style="left:1396px;top:131.500px;width:58px;height:23px;background:linear-gradient(#f4f4f4,#f8f8f8 40%,#e9e9e9)"></div><svg style="left:1155px;top:108px" width="300" height="200" viewBox="1155 108 300 200"><circle cx="1164" cy="118" r="6.700" fill="#686868"/><path d="M1161 115l6 6M1167 115l-6 6" stroke="#f0f0f0" stroke-width="2.100" stroke-linecap="round"/><circle cx="1182" cy="118" r="6.700" fill="#686868"/><rect x="1180.700" y="115" width="4.600" height="3.800" fill="none" stroke="#f0f0f0" stroke-width="1.100"/><rect x="1178.700" y="117.200" width="4.600" height="3.800" fill="#686868" stroke="#f0f0f0" stroke-width="1.100"/><g transform="translate(1185,143.3) scale(1.0)"><path d="M-7.700 .2 C-6.200 -7 6.200 -7 7.700 .2 C6.200 7.200 -6.200 7.200 -7.700 .2Z" fill="#000"/><ellipse cx="-.3" cy="1" rx="4.900" ry="3.300" fill="#fff"/><path d="M-3 -1.600 A2.800 2.800 0 0 0 2.400 -1.600 A6 4 0 0 0 -3 -1.600Z" fill="#000"/><circle cx="-.3" cy="-.6" r="2.500" fill="#000"/><path d="M-1.500 -1.600 l.9 1.300" stroke="#fff" stroke-width=".6"/></g><g transform="translate(1245,143.3) scale(1.0)"><path d="M-7.700 .2 C-6.200 -7 6.200 -7 7.700 .2 C6.200 7.200 -6.200 7.200 -7.700 .2Z" fill="#a9a9a9"/><ellipse cx="-.3" cy="1" rx="4.900" ry="3.300" fill="#fff"/><path d="M-3 -1.600 A2.800 2.800 0 0 0 2.400 -1.600 A6 4 0 0 0 -3 -1.600Z" fill="#a9a9a9"/><circle cx="-.3" cy="-.6" r="2.500" fill="#a9a9a9"/><path d="M-1.500 -1.600 l.9 1.300" stroke="#fff" stroke-width=".6"/></g><path d="M1299 143.300h12M1305 137.300v12" stroke="#e8121a" stroke-width="3"/><path d="M1359 143.300h12" stroke="#e8121a" stroke-width="3"/><g transform="translate(1425,143) scale(1.15) rotate(-45)"><rect x="-6" y="-1.700" width="13" height="3.400" fill="#e5a23a" stroke="#a8701c" stroke-width=".5"/><path d="M-5.500 -.4h12" stroke="#f7cc7a" stroke-width=".9"/><rect x="7" y="-1.700" width="2.800" height="3.400" rx=".8" fill="#e8262a"/><path d="M-6 -1.700 L-9.500 0 L-6 1.700z" fill="#c9a06a"/><path d="M-8.200 -.6L-9.500 0L-8.200 .6z" fill="#444"/></g><rect x="1161.500" y="163.1" width="15.600" height="8.400" fill="#fff" stroke="#000" stroke-width="1"/><g transform="translate(1423,166.5) scale(1.0)"><path d="M-7.700 .2 C-6.200 -7 6.200 -7 7.700 .2 C6.200 7.200 -6.200 7.200 -7.700 .2Z" fill="#000"/><ellipse cx="-.3" cy="1" rx="4.900" ry="3.300" fill="#fff"/><path d="M-3 -1.600 A2.800 2.800 0 0 0 2.400 -1.600 A6 4 0 0 0 -3 -1.600Z" fill="#000"/><circle cx="-.3" cy="-.6" r="2.500" fill="#000"/><path d="M-1.500 -1.600 l.9 1.300" stroke="#fff" stroke-width=".6"/></g><path d="M1441.7 166.5 v-2.700 a3.200 3.200 0 0 1 6.400 0 v2.700" fill="none" stroke="#bdbdbd" stroke-width="1.300"/><rect x="1440.1000000000001" y="166.5" width="9.600" height="7.200" fill="#b9b9b9"/><rect x="1161.500" y="183.1" width="15.600" height="8.400" fill="#000" stroke="#000" stroke-width="1"/><g transform="translate(1423,186.5) scale(1.0)"><path d="M-7.700 .2 C-6.200 -7 6.200 -7 7.700 .2 C6.200 7.200 -6.200 7.200 -7.700 .2Z" fill="#000"/><ellipse cx="-.3" cy="1" rx="4.900" ry="3.300" fill="#fff"/><path d="M-3 -1.600 A2.800 2.800 0 0 0 2.400 -1.600 A6 4 0 0 0 -3 -1.600Z" fill="#000"/><circle cx="-.3" cy="-.6" r="2.500" fill="#000"/><path d="M-1.500 -1.600 l.9 1.300" stroke="#fff" stroke-width=".6"/></g><path d="M1441.7 186.5 v-2.700 a3.200 3.200 0 0 1 6.400 0 v2.700" fill="none" stroke="#bdbdbd" stroke-width="1.300"/><rect x="1440.1000000000001" y="186.5" width="9.600" height="7.200" fill="#b9b9b9"/><rect x="1161.500" y="203.1" width="15.600" height="8.400" fill="#d2a95f" stroke="#000" stroke-width="1"/><g transform="translate(1423,206.5) scale(1.0)"><path d="M-7.700 .2 C-6.200 -7 6.200 -7 7.700 .2 C6.200 7.200 -6.200 7.200 -7.700 .2Z" fill="#000"/><ellipse cx="-.3" cy="1" rx="4.900" ry="3.300" fill="#fff"/><path d="M-3 -1.600 A2.800 2.800 0 0 0 2.400 -1.600 A6 4 0 0 0 -3 -1.600Z" fill="#000"/><circle cx="-.3" cy="-.6" r="2.500" fill="#000"/><path d="M-1.500 -1.600 l.9 1.300" stroke="#fff" stroke-width=".6"/></g><path d="M1441.7 206.5 v-2.700 a3.200 3.200 0 0 1 6.400 0 v2.700" fill="none" stroke="#bdbdbd" stroke-width="1.300"/><rect x="1440.1000000000001" y="206.5" width="9.600" height="7.200" fill="#b9b9b9"/><rect x="1161.500" y="223.1" width="15.600" height="8.400" fill="#5f9a30" stroke="#000" stroke-width="1"/><g transform="translate(1423,226.5) scale(1.0)"><path d="M-7.700 .2 C-6.200 -7 6.200 -7 7.700 .2 C6.200 7.200 -6.200 7.200 -7.700 .2Z" fill="#000"/><ellipse cx="-.3" cy="1" rx="4.900" ry="3.300" fill="#fff"/><path d="M-3 -1.600 A2.800 2.800 0 0 0 2.400 -1.600 A6 4 0 0 0 -3 -1.600Z" fill="#000"/><circle cx="-.3" cy="-.6" r="2.500" fill="#000"/><path d="M-1.500 -1.600 l.9 1.300" stroke="#fff" stroke-width=".6"/></g><path d="M1441.7 226.5 v-2.700 a3.200 3.200 0 0 1 6.400 0 v2.700" fill="none" stroke="#bdbdbd" stroke-width="1.300"/><rect x="1440.1000000000001" y="226.5" width="9.600" height="7.200" fill="#b9b9b9"/><rect x="1161.500" y="243.1" width="15.600" height="8.400" fill="#c0c0c0" stroke="#000" stroke-width="1"/><g transform="translate(1423,246.5) scale(1.0)"><path d="M-7.700 .2 C-6.200 -7 6.200 -7 7.700 .2 C6.200 7.200 -6.200 7.200 -7.700 .2Z" fill="#000"/><ellipse cx="-.3" cy="1" rx="4.900" ry="3.300" fill="#fff"/><path d="M-3 -1.600 A2.800 2.800 0 0 0 2.400 -1.600 A6 4 0 0 0 -3 -1.600Z" fill="#000"/><circle cx="-.3" cy="-.6" r="2.500" fill="#000"/><path d="M-1.500 -1.600 l.9 1.300" stroke="#fff" stroke-width=".6"/></g><path d="M1441.7 246.5 v-2.700 a3.200 3.200 0 0 1 6.400 0 v2.700" fill="none" stroke="#bdbdbd" stroke-width="1.300"/><rect x="1440.1000000000001" y="246.5" width="9.600" height="7.200" fill="#b9b9b9"/><rect x="1161.500" y="263.1" width="15.600" height="8.400" fill="#000" stroke="#000" stroke-width="1"/><g transform="translate(1423,266.5) scale(1.0)"><path d="M-7.700 .2 C-6.200 -7 6.200 -7 7.700 .2 C6.200 7.200 -6.200 7.200 -7.700 .2Z" fill="#000"/><ellipse cx="-.3" cy="1" rx="4.900" ry="3.300" fill="#fff"/><path d="M-3 -1.600 A2.800 2.800 0 0 0 2.400 -1.600 A6 4 0 0 0 -3 -1.600Z" fill="#000"/><circle cx="-.3" cy="-.6" r="2.500" fill="#000"/><path d="M-1.500 -1.600 l.9 1.300" stroke="#fff" stroke-width=".6"/></g><path d="M1441.7 266.5 v-2.700 a3.200 3.200 0 0 1 6.400 0 v2.700" fill="none" stroke="#bdbdbd" stroke-width="1.300"/><rect x="1440.1000000000001" y="266.5" width="9.600" height="7.200" fill="#b9b9b9"/><g transform="translate(1401.2,187) scale(1.0) rotate(-45)"><rect x="-6" y="-1.700" width="13" height="3.400" fill="#e5a23a" stroke="#a8701c" stroke-width=".5"/><path d="M-5.500 -.4h12" stroke="#f7cc7a" stroke-width=".9"/><rect x="7" y="-1.700" width="2.800" height="3.400" rx=".8" fill="#e8262a"/><path d="M-6 -1.700 L-9.500 0 L-6 1.700z" fill="#c9a06a"/><path d="M-8.200 -.6L-9.500 0L-8.200 .6z" fill="#444"/></g></svg><span style="left:1183.2px;top:158.5px;font-size:13.7px;line-height:18px;letter-spacing:-0.825px;white-space:nowrap;color:#111">0</span><span style="left:1183.2px;top:178.5px;font-size:13.7px;line-height:18px;letter-spacing:-0.306px;white-space:nowrap;color:#111">Bordo</span><span style="left:1183.2px;top:198.5px;font-size:13.7px;line-height:18px;letter-spacing:-0.263px;white-space:nowrap;color:#111">Percorsi</span><span style="left:1183.2px;top:218.5px;font-size:13.7px;line-height:18px;letter-spacing:-0.402px;white-space:nowrap;color:#111">Piante</span><span style="left:1183.2px;top:238.5px;font-size:13.7px;line-height:18px;letter-spacing:-0.011px;white-space:nowrap;color:#111">Strutture</span><span style="left:1183.2px;top:258.5px;font-size:13.7px;line-height:18px;letter-spacing:0.039px;white-space:nowrap;color:#111">Titolo</span><div style="left:1454px;top:130px;width:1px;height:668px;background:#c4c4c4"></div><div style="left:1454.500px;top:108px;width:45.500px;height:690px;background:linear-gradient(90deg,#dcdcdc,#ebebeb 6%,#e4e4e4 45%,#c9c9c9)"></div><div style="left:1462.3px;top:116px;width:1.800px;height:1.800px;background:#a4a4a4"></div><div style="left:1468.3px;top:116px;width:1.800px;height:1.800px;background:#a4a4a4"></div><div style="left:1474.4px;top:116px;width:1.800px;height:1.800px;background:#a4a4a4"></div><div style="left:1480.5px;top:116px;width:1.800px;height:1.800px;background:#a4a4a4"></div><div style="left:1486.5px;top:116px;width:1.800px;height:1.800px;background:#a4a4a4"></div><div class="pressed" style="left:1456.500px;top:120.500px;width:46px;height:42px;background:#b5b5b5;border-radius:6px"></div><div class="pressed" style="left:1456.500px;top:417px;width:46px;height:43px;background:#b5b5b5;border-radius:6px"></div><div style="left:1458px;top:261.300px;width:42px;height:1px;background:repeating-linear-gradient(90deg,#4a4a4a 0,#4a4a4a 1px,transparent 1px,transparent 3px)"></div><div style="left:1458px;top:409px;width:42px;height:1px;background:repeating-linear-gradient(90deg,#4a4a4a 0,#4a4a4a 1px,transparent 1px,transparent 3px)"></div><svg style="left:1455px;top:108px" width="45" height="400" viewBox="1455 108 45 400"><rect x="1463.500" y="127.5" width="27.500" height="27.200" fill="#fff" stroke="#1a1a1a" stroke-width="1"/><rect x="1463.500" y="127.5" width="27.500" height="4.200" fill="#000"/><rect x="1464.500" y="128.3" width="3.200" height="2.900" fill="#fff"/><g transform="translate(1463.500,127)"><path d="M7 14.500 l8 -3.500 l0 10 l-8 3.500z" fill="#bdbdbd" stroke="#555" stroke-width=".7"/><path d="M9.500 13.500 l8 -3.500 l0 10 l-8 3.500z" fill="#d9d9d9" stroke="#555" stroke-width=".7"/><path d="M12 12.500 l9 -4 l0 10 l-9 4z" fill="#fff" stroke="#555" stroke-width=".7"/><path d="M14 19.500 l4.500 -7 l.5 5.500 M15.500 17.500 l3.200 -1.200" stroke="#ff3030" stroke-width="1.100" fill="none"/></g><rect x="1463.500" y="174.5" width="27.500" height="27.200" fill="#fff" stroke="#1a1a1a" stroke-width="1"/><rect x="1463.500" y="174.5" width="27.500" height="4.200" fill="#000"/><rect x="1464.500" y="175.3" width="3.200" height="2.900" fill="#fff"/><g transform="translate(1463.500,174)"><rect x="7" y="10.500" width="10.500" height="7.500" fill="#f5efc6" stroke="#8a8a7a" stroke-width=".8"/><circle cx="16.500" cy="17.500" r="4.200" fill="#f5efc6" fill-opacity=".75" stroke="#8a8a7a" stroke-width=".8"/></g><rect x="1463.500" y="220.5" width="27.500" height="27.200" fill="#fff" stroke="#1a1a1a" stroke-width="1"/><rect x="1463.500" y="220.5" width="27.500" height="4.200" fill="#000"/><rect x="1464.500" y="221.3" width="3.200" height="2.900" fill="#fff"/><g transform="translate(1463.500,220)"><rect x="5.500" y="10.500" width="16.500" height="11" rx="2" fill="#f5f5f2" stroke="#b9cbe8" stroke-width="1.100"/></g><rect x="1463.500" y="276.5" width="27.500" height="27.200" fill="#fff" stroke="#1a1a1a" stroke-width="1"/><rect x="1463.500" y="276.5" width="27.500" height="4.200" fill="#000"/><rect x="1464.500" y="277.3" width="3.200" height="2.900" fill="#fff"/><g transform="translate(1463.500,276)"><rect x="3.500" y="8.200" width="4" height="2.600" rx=".6" fill="#000"/><rect x="3.500" y="14.200" width="4" height="2.600" rx=".6" fill="#000"/><rect x="3.500" y="20.200" width="4" height="2.600" rx=".6" fill="#000"/><rect x="10.500" y="8.200" width="13.500" height="2.600" fill="#fff" stroke="#333" stroke-width=".7"/><rect x="10.500" y="14.200" width="13.500" height="2.600" fill="#fff" stroke="#333" stroke-width=".7"/><rect x="10.500" y="20.200" width="13.500" height="2.600" fill="#fff" stroke="#333" stroke-width=".7"/></g><rect x="1463.500" y="323.0" width="27.500" height="27.200" fill="#fff" stroke="#1a1a1a" stroke-width="1"/><rect x="1463.500" y="323.0" width="27.500" height="4.200" fill="#000"/><rect x="1464.500" y="323.8" width="3.200" height="2.900" fill="#fff"/><g transform="translate(1463.500,322.5)"><path d="M6.500 9.500 h14.500 l-5.500 7 v6.500 l-3.500 -1.500 v-5z" fill="#9a9a9a" stroke="#5a5a5a" stroke-width=".7"/><ellipse cx="13.750" cy="9.500" rx="7.250" ry="1.600" fill="#7a7a7a"/></g><rect x="1463.500" y="369.0" width="27.500" height="27.200" fill="#fff" stroke="#1a1a1a" stroke-width="1"/><rect x="1463.500" y="369.0" width="27.500" height="4.200" fill="#000"/><rect x="1464.500" y="369.8" width="3.200" height="2.900" fill="#fff"/><g transform="translate(1463.500,368.5)"><path d="M6 9 l0 14 M6 9.500 l6 4 l0 5.500 l-6 4" fill="none" stroke="#444" stroke-width=".9"/><rect x="12" y="12.500" width="9" height="7.500" rx="1.500" fill="#9a9a9a" stroke="#666" stroke-width=".6"/><path d="M4 16.200h19" stroke="#ff8080" stroke-width=".8" stroke-dasharray="2 1"/></g><rect x="1463.500" y="425.0" width="27.500" height="27.200" fill="#fff" stroke="#1a1a1a" stroke-width="1"/><rect x="1463.500" y="425.0" width="27.500" height="4.200" fill="#000"/><rect x="1464.500" y="425.8" width="3.200" height="2.900" fill="#fff"/><g transform="translate(1463.500,424.5)"><path d="M2.500 9h10M2.500 12.300h11M2.500 15.600h12M2.500 18.900h13" stroke="#666" stroke-width="1" stroke-dasharray="1.600 .5"/><path d="M0 22h27.500" stroke="#222" stroke-width=".8"/><path d="M3 24.600h2M9 24.600h15" stroke="#444" stroke-width="1"/></g><rect x="1463.500" y="471.5" width="27.500" height="27.200" fill="#fff" stroke="#1a1a1a" stroke-width="1"/><rect x="1463.500" y="471.5" width="27.500" height="4.200" fill="#000"/><rect x="1464.500" y="472.3" width="3.200" height="2.900" fill="#fff"/><g transform="translate(1463.500,471)"><rect x="7.500" y="10" width="12.500" height="14" rx="1" fill="#c58a2e" stroke="#9a6a1c" stroke-width=".7"/><rect x="9.200" y="11.800" width="9.200" height="10.800" fill="#f4f4f4"/><rect x="11" y="8.800" width="5.600" height="2.400" rx=".6" fill="#9a9a8e" stroke="#6a6a60" stroke-width=".5"/><path d="M10.500 15h6M10.500 17h6M10.500 19h4" stroke="#ccc" stroke-width=".7"/></g></svg>
<div style="left:72px;top:748px;width:1081.500px;height:23px;background:#fff;border-top:1.500px solid #c6c6c6;border-bottom:1px solid #c9c9c9"></div><span style="left:76.7px;top:749.5px;font-size:13.6px;line-height:18px;letter-spacing:-0.202px;white-space:nowrap;color:#0a0acd;font-style:italic">Comando:</span><span style="left:141.9px;top:749.5px;font-size:13.6px;line-height:18px;letter-spacing:0.017px;white-space:nowrap;color:#0a0acd">printpreview</span><div style="left:72px;top:771px;width:1081.500px;height:27px;background:#ececec"></div><span style="left:73.4px;top:776px;font-size:13.7px;line-height:18px;letter-spacing:-0.345px;white-space:nowrap;color:#111">Comando:</span><div style="left:138px;top:776px;width:989px;height:18.500px;background:#fff"></div><div style="left:1127.500px;top:772.500px;width:25px;height:25px;background:linear-gradient(#f7f7f7,#ededed);border:1px solid #bdbdbd"></div><svg style="left:1127px;top:772px" width="26" height="26" viewBox="1127 772 26 26"><rect x="1133.500" y="780.500" width="13" height="9" fill="#fff" stroke="#111" stroke-width="1"/><rect x="1133" y="780" width="14" height="3" fill="#000"/></svg><div style="left:0;top:798px;width:1500px;height:46px;background:#dddddd"></div><span style="left:2.2px;top:805px;font-size:10.3px;line-height:14px;letter-spacing:0.001px;white-space:nowrap;color:#1a1a1a">-4.1083,21.509</span><span style="left:2.2px;top:826px;font-size:10.3px;line-height:14px;letter-spacing:-0.129px;white-space:nowrap;color:#1a1a1a">@-4.1083,21.509</span><div style="left:253px;top:802px;width:1px;height:40px;background:#7a7a7a"></div><span style="left:256.5px;top:805px;font-size:10.3px;line-height:14px;letter-spacing:-0.312px;white-space:nowrap;color:#1a1a1a">21.8978&lt;101°</span><span style="left:256.5px;top:826px;font-size:10.3px;line-height:14px;letter-spacing:-0.399px;white-space:nowrap;color:#1a1a1a">@21.8978&lt;101°</span><span style="left:949.2px;top:815.5px;font-size:10.3px;line-height:14px;letter-spacing:-0.045px;white-space:nowrap;color:#1a1a1a">Nessun entità selezionate.</span><div style="left:506px;top:819px;width:6px;height:6px;border-radius:3px;background:#cbcbcb"></div><div style="left:940.5px;top:819px;width:6px;height:6px;border-radius:3px;background:#cbcbcb"></div><div style="left:1269px;top:819px;width:6px;height:6px;border-radius:3px;background:#cbcbcb"></div><svg style="left:714px;top:804px" width="24" height="34" viewBox="714 804 24 34"><rect x="717.300" y="806.500" width="17" height="28.500" rx="8.500" fill="#fff" stroke="#222" stroke-width="1"/><path d="M717.300 818.500h17M725.800 806.500v3M725.800 815v3.500" stroke="#222" stroke-width="1" fill="none"/><rect x="724.600" y="809.300" width="2.400" height="5.800" rx="1.200" fill="#fff" stroke="#222" stroke-width=".9"/></svg>
<svg style="left:500px;top:50px" width="220" height="110" viewBox="500 50 220 110"><defs><radialGradient id="ring" cx="0.5" cy="0.5" r="0.5"><stop offset="0" stop-color="#b8cde6" stop-opacity=".08"/><stop offset="0.70" stop-color="#b4c9e2" stop-opacity=".14"/><stop offset="0.82" stop-color="#9db7d6" stop-opacity=".35"/><stop offset="0.90" stop-color="#7f9fc6" stop-opacity=".60"/><stop offset="0.97" stop-color="#7f9fc6" stop-opacity=".42"/><stop offset="1" stop-color="#7f9fc6" stop-opacity=".08"/></radialGradient><clipPath id="ringclip"><rect x="500" y="67" width="220" height="93"/></clipPath></defs><circle cx="561" cy="96" r="39" fill="url(#ring)"/></svg><div style="left:545.8px;top:123.3px;width:148px;height:23.5px;background:linear-gradient(#f3f6fa,#e9eef5 50%,#d9e1ec);border:1px solid #c3c9d3;border-radius:2px;box-shadow:1.500px 2px 2.500px rgba(0,0,0,.4)"></div><span style="left:551px;top:126px;font-size:14.6px;line-height:18px;letter-spacing:-0.281px;white-space:nowrap;color:#000">Centratura automatica</span><svg style="left:555px;top:92px" width="30" height="40" viewBox="555 92 30 40"><path d="M561.3 97 L561.3 118.7 L566.5 113.8 L571.4 123.5 L574.6 122 L570.4 112.5 L575.9 112.1 Z" fill="none" stroke="#fff" stroke-width="3" stroke-linejoin="round" opacity=".9"/><path d="M561.3 97 L561.3 118.7 L566.5 113.8 L571.4 123.5 L574.6 122 L570.4 112.5 L575.9 112.1 Z" fill="#fff" stroke="#000" stroke-width="1.4" stroke-linejoin="miter"/></svg>
</body></html>
